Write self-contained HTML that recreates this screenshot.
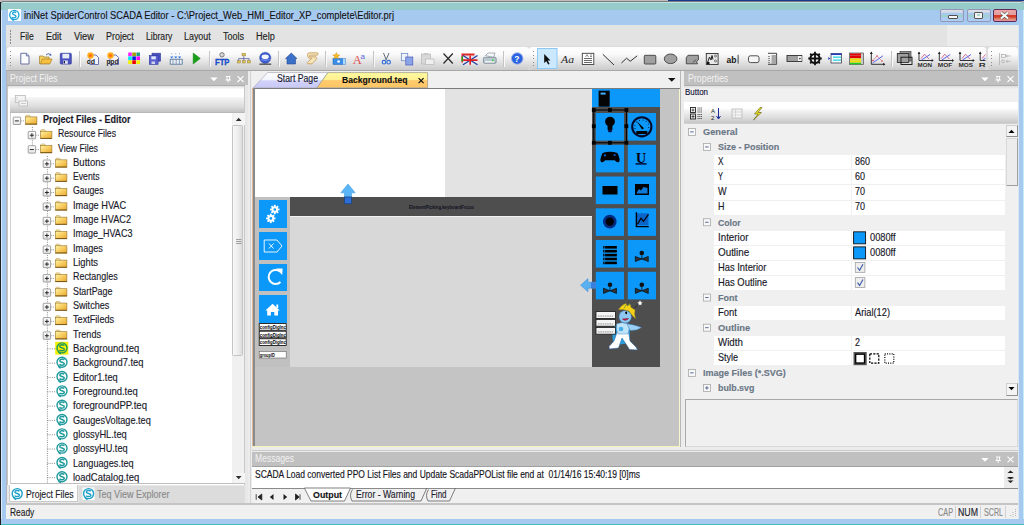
<!DOCTYPE html>
<html><head><meta charset="utf-8">
<style>
*{margin:0;padding:0;box-sizing:border-box}
html,body{width:1024px;height:525px;overflow:hidden;background:#d4d4d4}
body{position:relative;font-family:"Liberation Sans",sans-serif}
.a{position:absolute}
.t{position:absolute;white-space:pre;line-height:1;font-family:"Liberation Sans",sans-serif;-webkit-text-stroke:0.15px currentColor}
svg.a{overflow:visible}
</style></head><body>
<div class="a" style="left:0.00px;top:0.00px;width:1024.00px;height:525.00px;background:#bebebe;"></div>
<div class="a" style="left:668.00px;top:0.00px;width:356.00px;height:1.20px;background:#17388e;"></div>
<div class="a" style="left:0.00px;top:1.00px;width:1024.00px;height:524.00px;background:#7c7c7c;border-radius:4px 4px 0 0;"></div>
<div class="a" style="left:0.00px;top:2.00px;width:1.00px;height:523.00px;background:#202020;"></div>
<div class="a" style="left:1.00px;top:2.00px;width:1023.00px;height:523.00px;background:#a6c9ef;border-radius:3px 3px 0 0;"></div>
<div class="a" style="left:1.00px;top:2.00px;width:1023.00px;height:8.00px;background:#96cbca;border-radius:3px 3px 0 0;"></div>
<div class="a" style="left:3.00px;top:2.00px;width:1018.00px;height:1.00px;background:#bde3e3;"></div>
<div class="a" style="left:1.00px;top:10.00px;width:1.00px;height:509.00px;background:#d8ecff;"></div>
<div class="a" style="left:1023.00px;top:10.00px;width:1.00px;height:513.00px;background:#c4ecf8;"></div>
<div class="a" style="left:1.00px;top:519.00px;width:1023.00px;height:4.50px;background:#a6c9ef;"></div>
<div class="a" style="left:1.00px;top:523.50px;width:1023.00px;height:1.50px;background:#45bcb6;"></div>
<div class="a" style="left:6.00px;top:25.00px;width:1012.00px;height:494.00px;background:#f0f0f0;"></div>
<div class="a" style="left:6.00px;top:25.00px;width:1.00px;height:494.00px;background:#b0b4bc;"></div>
<div class="a" style="left:1018.00px;top:25.00px;width:1.00px;height:494.00px;background:#dde6ee;"></div>
<div class="a" style="left:8.00px;top:9.00px;width:12.50px;height:12.00px;background:#ffffff;"></div>
<svg class="a" style="left:8px;top:9px;" width="13" height="13" viewBox="0 0 13 13"><circle cx="6.3" cy="6" r="4.6" fill="none" stroke="#1aa3d6" stroke-width="1.3"/><path d="M8.2 3.6 C7 2.6 4.4 2.9 4.6 4.6 C4.8 6.2 8.2 5.8 8 7.6 C7.8 9.2 5 9.2 3.9 8.2" fill="none" stroke="#1aa3d6" stroke-width="1.3"/><path d="M4 10 L5.5 12" stroke="#1aa3d6" stroke-width="1.2"/></svg>
<div class="t" style="left:23.60px;top:10.00px;font-size:10.59px;color:#141414;font-weight:normal;transform-origin:0 0;transform:scaleX(0.8818);">iniNet SpiderControl SCADA Editor - C:\Project_Web_HMI_Editor_XP_complete\Editor.prj</div>
<div class="a" style="left:940.30px;top:9.10px;width:24.00px;height:12.50px;background:linear-gradient(#dcdfe6 0%,#d4dae4 22%,#a9c9f0 25%,#a9c9f0 45%,#9fd2cb 50%,#9fd2cb 62%,#a9c9f0 68%,#b0d0f2 100%);border:1px solid #9494b8;border-radius:2px;"></div>
<div class="a" style="left:966.50px;top:9.10px;width:24.00px;height:12.50px;background:linear-gradient(#dcdfe6 0%,#d4dae4 22%,#a9c9f0 25%,#a9c9f0 45%,#9fd2cb 50%,#9fd2cb 62%,#a9c9f0 68%,#b0d0f2 100%);border:1px solid #9494b8;border-radius:2px;"></div>
<div class="a" style="left:992.50px;top:9.10px;width:24.00px;height:12.50px;background:linear-gradient(#f2a8a8 0%,#eaa0a0 22%,#e0a4a4 25%,#e0a0a0 45%,#d83a2a 50%,#d83a2a 64%,#d46440 70%,#e08a80 85%,#e89898 100%);border:1px solid #5a2a58;border-radius:2px;"></div>
<div class="a" style="left:948.00px;top:15.00px;width:9.50px;height:3.60px;background:#f8f8f8;border:1px solid #505050;border-radius:1px;"></div>
<div class="a" style="left:974.00px;top:11.80px;width:9.20px;height:6.80px;background:#f4f4f4;border:1.6px solid #585858;border-radius:1px;"></div>
<div class="a" style="left:977.00px;top:14.30px;width:3.20px;height:1.80px;background:#a8d8d0;"></div>
<svg class="a" style="left:0px;top:0px;" width="1024" height="30" viewBox="0 0 1024 30"><path d="M1001 12.6 L1008 18.4 M1008 12.6 L1001 18.4" stroke="#606060" stroke-width="3.2"/><path d="M1001 12.6 L1008 18.4 M1008 12.6 L1001 18.4" stroke="#fafafa" stroke-width="2"/></svg>
<div class="a" style="left:6.00px;top:25.00px;width:941.00px;height:21.00px;background:#e3e3e3;"></div>
<div class="a" style="left:947.00px;top:25.00px;width:71.00px;height:21.00px;background:#ebebeb;"></div>
<div class="a" style="left:9.50px;top:30.00px;width:1.50px;height:1.50px;background:#8c8c8c;"></div>
<div class="a" style="left:9.50px;top:33.00px;width:1.50px;height:1.50px;background:#8c8c8c;"></div>
<div class="a" style="left:9.50px;top:36.00px;width:1.50px;height:1.50px;background:#8c8c8c;"></div>
<div class="a" style="left:9.50px;top:39.00px;width:1.50px;height:1.50px;background:#8c8c8c;"></div>
<div class="a" style="left:9.50px;top:42.00px;width:1.50px;height:1.50px;background:#8c8c8c;"></div>
<div class="t" style="left:20.10px;top:32.00px;font-size:10.38px;color:#1e1e1e;font-weight:normal;transform-origin:0 0;transform:scaleX(0.8194);">File</div>
<div class="t" style="left:46.30px;top:32.00px;font-size:10.38px;color:#1e1e1e;font-weight:normal;transform-origin:0 0;transform:scaleX(0.8720);">Edit</div>
<div class="t" style="left:73.80px;top:32.00px;font-size:10.38px;color:#1e1e1e;font-weight:normal;transform-origin:0 0;transform:scaleX(0.8964);">View</div>
<div class="t" style="left:105.60px;top:32.00px;font-size:10.38px;color:#1e1e1e;font-weight:normal;transform-origin:0 0;transform:scaleX(0.8608);">Project</div>
<div class="t" style="left:145.70px;top:32.00px;font-size:10.38px;color:#1e1e1e;font-weight:normal;transform-origin:0 0;transform:scaleX(0.8292);">Library</div>
<div class="t" style="left:184.40px;top:32.00px;font-size:10.38px;color:#1e1e1e;font-weight:normal;transform-origin:0 0;transform:scaleX(0.8570);">Layout</div>
<div class="t" style="left:223.00px;top:32.00px;font-size:10.38px;color:#1e1e1e;font-weight:normal;transform-origin:0 0;transform:scaleX(0.8707);">Tools</div>
<div class="t" style="left:256.40px;top:32.00px;font-size:10.38px;color:#1e1e1e;font-weight:normal;transform-origin:0 0;transform:scaleX(0.8808);">Help</div>
<div class="a" style="left:6.00px;top:46.00px;width:1012.00px;height:25.00px;background:#dcdcdc;"></div>
<div class="a" style="left:7.00px;top:47.00px;width:521.50px;height:23.00px;background:linear-gradient(#fefefe 0%,#fbfbfb 30%,#ededed 50%,#dcdcdc 75%,#cbcbcb 100%);border-radius:3px;"></div>
<div class="a" style="left:529.00px;top:47.00px;width:457.00px;height:23.00px;background:linear-gradient(#fefefe 0%,#fbfbfb 30%,#ededed 50%,#dcdcdc 75%,#cbcbcb 100%);border-radius:3px;"></div>
<div class="a" style="left:987.50px;top:47.00px;width:30.50px;height:23.00px;background:linear-gradient(#fefefe 0%,#fbfbfb 30%,#ededed 50%,#dcdcdc 75%,#cbcbcb 100%);border-radius:3px;"></div>
<div class="a" style="left:6.00px;top:69.60px;width:1012.00px;height:1.20px;background:#a8a8a8;"></div>
<div class="a" style="left:10.00px;top:51.00px;width:1.20px;height:1.30px;background:#8c8c8c;"></div>
<div class="a" style="left:10.00px;top:54.50px;width:1.20px;height:1.30px;background:#8c8c8c;"></div>
<div class="a" style="left:10.00px;top:58.00px;width:1.20px;height:1.30px;background:#8c8c8c;"></div>
<div class="a" style="left:10.00px;top:61.50px;width:1.20px;height:1.30px;background:#8c8c8c;"></div>
<div class="a" style="left:10.00px;top:65.00px;width:1.20px;height:1.30px;background:#8c8c8c;"></div>
<div class="a" style="left:533.00px;top:51.00px;width:1.20px;height:1.30px;background:#8c8c8c;"></div>
<div class="a" style="left:533.00px;top:54.50px;width:1.20px;height:1.30px;background:#8c8c8c;"></div>
<div class="a" style="left:533.00px;top:58.00px;width:1.20px;height:1.30px;background:#8c8c8c;"></div>
<div class="a" style="left:533.00px;top:61.50px;width:1.20px;height:1.30px;background:#8c8c8c;"></div>
<div class="a" style="left:533.00px;top:65.00px;width:1.20px;height:1.30px;background:#8c8c8c;"></div>
<div class="a" style="left:991.00px;top:51.00px;width:1.20px;height:1.30px;background:#8c8c8c;"></div>
<div class="a" style="left:991.00px;top:54.50px;width:1.20px;height:1.30px;background:#8c8c8c;"></div>
<div class="a" style="left:991.00px;top:58.00px;width:1.20px;height:1.30px;background:#8c8c8c;"></div>
<div class="a" style="left:991.00px;top:61.50px;width:1.20px;height:1.30px;background:#8c8c8c;"></div>
<div class="a" style="left:991.00px;top:65.00px;width:1.20px;height:1.30px;background:#8c8c8c;"></div>
<div class="a" style="left:79.00px;top:51.00px;width:0.90px;height:16.00px;background:#c4c4c4;"></div>
<div class="a" style="left:79.90px;top:51.00px;width:0.70px;height:16.00px;background:#fafafa;"></div>
<div class="a" style="left:209.00px;top:51.00px;width:0.90px;height:16.00px;background:#c4c4c4;"></div>
<div class="a" style="left:209.90px;top:51.00px;width:0.70px;height:16.00px;background:#fafafa;"></div>
<div class="a" style="left:278.00px;top:51.00px;width:0.90px;height:16.00px;background:#c4c4c4;"></div>
<div class="a" style="left:278.90px;top:51.00px;width:0.70px;height:16.00px;background:#fafafa;"></div>
<div class="a" style="left:325.00px;top:51.00px;width:0.90px;height:16.00px;background:#c4c4c4;"></div>
<div class="a" style="left:325.90px;top:51.00px;width:0.70px;height:16.00px;background:#fafafa;"></div>
<div class="a" style="left:373.00px;top:51.00px;width:0.90px;height:16.00px;background:#c4c4c4;"></div>
<div class="a" style="left:373.90px;top:51.00px;width:0.70px;height:16.00px;background:#fafafa;"></div>
<div class="a" style="left:503.00px;top:51.00px;width:0.90px;height:16.00px;background:#c4c4c4;"></div>
<div class="a" style="left:503.90px;top:51.00px;width:0.70px;height:16.00px;background:#fafafa;"></div>
<div class="a" style="left:891.00px;top:51.00px;width:0.90px;height:16.00px;background:#c4c4c4;"></div>
<div class="a" style="left:891.90px;top:51.00px;width:0.70px;height:16.00px;background:#fafafa;"></div>
<svg class="a" style="left:0px;top:0px;" width="1024" height="72" viewBox="0 0 1024 72"><path d="M20.8 53.3 H26.6 L29 55.7 V64 H20.8 Z" fill="#fcfcff" stroke="#5a6494" stroke-width="0.9"/><path d="M26.4 53.3 V55.9 H29" fill="#c8d0f0" stroke="#5a6494" stroke-width="0.8"/><path d="M39.5 56 H43 L44 57 H49 V63.8 H39.5 Z" fill="#f0d060" stroke="#a08030" stroke-width="0.7"/><path d="M40.5 63.8 L42.3 59 H52 L50 63.8 Z" fill="#f8c040" stroke="#b08028" stroke-width="0.7"/><path d="M46 55 Q48 52.5 50.5 54.5" fill="none" stroke="#4060a0" stroke-width="0.9"/><path d="M50 53.5 L51.8 55.3 L49.5 55.8Z" fill="#3050b0"/><rect x="60.3" y="53.3" width="11" height="10.8" rx="0.8" fill="#4a50c0" stroke="#30389a" stroke-width="0.7"/><rect x="62.4" y="53.8" width="6.8" height="4.6" fill="#e8ecf8"/><rect x="63" y="60.5" width="4.8" height="3.3" fill="#e0e4f0"/><rect x="63.6" y="61" width="1.4" height="2.4" fill="#202040"/><path d="M90 55 H96 L98.5 57.5 V64.5 H90 Z" fill="#f4f4fa" stroke="#5058a0" stroke-width="0.8"/><circle cx="90.5" cy="55.5" r="3.2" fill="#ffb020"/><circle cx="90.5" cy="55.5" r="1.6" fill="#ff7010"/><path d="M110 55 H116 L118.5 57.5 V64.5 H110 Z" fill="#f4f4fa" stroke="#5058a0" stroke-width="0.8"/><circle cx="110.5" cy="55.5" r="3.2" fill="#ffb020"/><circle cx="110.5" cy="55.5" r="1.6" fill="#ff7010"/><text x="86.8" y="64.3" font-family="Liberation Sans" font-weight="bold" font-size="7" fill="#202020">cd</text><text x="106.5" y="64.3" font-family="Liberation Sans" font-weight="bold" font-size="6.3" fill="#202020" textLength="12" lengthAdjust="spacingAndGlyphs">ppd</text><rect x="128.2" y="52.5" width="3.6" height="3.7" fill="#ff20ff"/><rect x="132.29999999999998" y="52.5" width="3.6" height="3.7" fill="#a0a000"/><rect x="136.39999999999998" y="52.5" width="3.6" height="3.7" fill="#20a080"/><rect x="128.2" y="56.4" width="3.6" height="3.7" fill="#00e8f0"/><rect x="132.29999999999998" y="56.4" width="3.6" height="3.7" fill="#0020e0"/><rect x="136.39999999999998" y="56.4" width="3.6" height="3.7" fill="#ff00ff"/><rect x="128.2" y="60.3" width="3.6" height="3.7" fill="#f0f000"/><rect x="132.29999999999998" y="60.3" width="3.6" height="3.7" fill="#f00000"/><rect x="136.39999999999998" y="60.3" width="3.6" height="3.7" fill="#f0f000"/><rect x="152" y="53.2" width="8.5" height="8" fill="#4a50c0" stroke="#30389a" stroke-width="0.6"/><rect x="149.3" y="55.5" width="8.8" height="8.8" fill="#5a60d0" stroke="#30389a" stroke-width="0.6"/><rect x="151.3" y="56.3" width="4.5" height="3" fill="#e0e4f8"/><rect x="151.5" y="61.5" width="3.5" height="2.5" fill="#d0d4e8"/><rect x="170.2" y="59.2" width="12" height="5" fill="#e8eef8" stroke="#507090" stroke-width="0.8"/><path d="M173 59.2 V64.2 M176.2 59.2 V64.2 M179.4 59.2 V64.2" stroke="#507090" stroke-width="0.6"/><path d="M170.20000000000002 56.5 L171.8 58.6 L173.4 56.5 Z" fill="#3070e0"/><rect x="171.4" y="53.2" width="0.8" height="1" fill="#6090d0"/><path d="M174.20000000000002 56.5 L175.8 58.6 L177.4 56.5 Z" fill="#3070e0"/><rect x="175.4" y="53.2" width="0.8" height="1" fill="#6090d0"/><path d="M178.0 56.5 L179.6 58.6 L181.2 56.5 Z" fill="#3070e0"/><rect x="179.2" y="53.2" width="0.8" height="1" fill="#6090d0"/><path d="M193.2 53 L200.3 58.4 L193.2 64 Z" fill="#18a018" stroke="#108010" stroke-width="0.5"/><circle cx="222" cy="54.8" r="2.2" fill="#d8d8d8" stroke="#505050" stroke-width="0.7"/><text x="215" y="64.8" font-family="Liberation Sans" font-weight="bold" font-size="8.4" fill="#1a5ef0" stroke="#0a2a90" stroke-width="0.3" textLength="14.5" lengthAdjust="spacingAndGlyphs">FTP</text><rect x="242" y="53.3" width="3.6" height="2.5" fill="#d8c860" stroke="#a08030" stroke-width="0.5"/><path d="M243.8 55.8 V58.6 M238.6 58.6 H249.2 M238.6 58.6 V61 M243.8 58.6 V61 M249 58.6 V61" stroke="#5050a0" stroke-width="0.7"/><rect x="237.5" y="60.6" width="2.8" height="2.4" fill="#d8c860" stroke="#a08030" stroke-width="0.5"/><rect x="242.4" y="60.6" width="2.8" height="2.4" fill="#d8c860" stroke="#a08030" stroke-width="0.5"/><rect x="247.5" y="60.6" width="2.8" height="2.4" fill="#d8c860" stroke="#a08030" stroke-width="0.5"/><circle cx="265.2" cy="57.8" r="5.6" fill="#3a5cd0" stroke="#2a40a0" stroke-width="0.6" stroke-dasharray="1.4 0.6"/><ellipse cx="265.2" cy="56.8" rx="3.6" ry="2.4" fill="#f4f6fc"/><path d="M261 59.5 Q265 61.5 269.5 59.5" fill="none" stroke="#8aa0f0" stroke-width="0.8"/><rect x="259.4" y="63.6" width="11.8" height="1.1" fill="#303030"/><path d="M285.5 58.6 L291.3 53 L297 58.6 H295.5 V64 H287 V58.6 Z" fill="#3a70c8" stroke="#284a90" stroke-width="0.6"/><path d="M307.5 54.5 Q307.5 52.8 309.5 52.8 H317.5 Q318.8 53.5 317.3 55.2 H310.5 Q309 55.2 309.5 56.8 H316 Q317.8 58.5 315.5 60.2 L312 63.8 H307.8 Q306.5 62.5 308.5 61.5 L311.8 58.2 H309.2 Q307.5 57.5 307.5 54.5 Z" fill="#f2e6b8" stroke="#c89858" stroke-width="0.8"/><rect x="333" y="58.5" width="12.5" height="6" fill="#3a8ee8" stroke="#2060b0" stroke-width="0.5"/><rect x="343" y="58.5" width="2.5" height="6" fill="#b0d8f8"/><path d="M336.3 52.4 L337.3 54.8 L339.8 54.9 L337.9 56.4 L338.6 58.8 L336.3 57.4 L334 58.8 L334.7 56.4 L332.8 54.9 L335.3 54.8 Z" fill="#f8c020" stroke="#d08010" stroke-width="0.4"/><circle cx="338.6" cy="61.5" r="1.3" fill="#fff"/><text x="352.8" y="64.3" font-family="Liberation Serif" font-size="12.5" fill="#e05050">A</text><text x="360.5" y="58.5" font-family="Liberation Sans" font-size="8" fill="#5a68e0">a</text><path d="M383.5 53 L386.3 60 M389 53 L386 60" stroke="#606878" stroke-width="1"/><circle cx="384" cy="62.2" r="1.8" fill="none" stroke="#2e6ad8" stroke-width="1.1"/><circle cx="388.6" cy="62.2" r="1.8" fill="none" stroke="#2e6ad8" stroke-width="1.1"/><rect x="401.3" y="53.3" width="6.5" height="7.5" fill="#eef2fa" stroke="#6080c0" stroke-width="0.7"/><rect x="405.8" y="57" width="7" height="8" fill="#8aa4e8" stroke="#4a5ab8" stroke-width="0.7"/><rect x="421.5" y="54" width="9" height="10" fill="#d8d8d8" stroke="#b8b8b8" stroke-width="0.7"/><rect x="425.5" y="59" width="8.5" height="5.5" fill="#efefef" stroke="#b8b8b8" stroke-width="0.7"/><rect x="424" y="53" width="4" height="2" fill="#c8c8c8"/><path d="M443.5 53.5 L452.8 63.5 M452.8 53.5 L443.5 63.5" stroke="#282828" stroke-width="1.2"/><rect x="461.5" y="53.5" width="13" height="9" fill="#e02828"/><rect x="463" y="55.5" width="14.5" height="9.2" fill="#e8e8f0"/><path d="M463 55.5 L477.5 64.7 M477.5 55.5 L463 64.7" stroke="#2040a0" stroke-width="1.3"/><path d="M470.2 55.5 V64.7 M463 60.1 H477.5" stroke="#e02020" stroke-width="1.6"/><rect x="461.5" y="56.5" width="1.5" height="5" fill="#20a020"/><path d="M485.5 55.5 L488 53 H495 L493.5 57.5 Z" fill="#f8f8f8" stroke="#708090" stroke-width="0.6"/><rect x="483.4" y="57.3" width="12.8" height="6" rx="1.2" fill="#b8c8d0" stroke="#607080" stroke-width="0.6"/><rect x="485" y="61" width="9" height="1.5" fill="#f0f0f0"/><circle cx="492.8" cy="60.3" r="0.9" fill="#20d020"/><circle cx="517.2" cy="58.5" r="5.8" fill="#2a64e0" stroke="#a8b8e8" stroke-width="0.9"/><text x="514.3" y="62" font-family="Liberation Sans" font-weight="bold" font-size="8.5" fill="#fff">?</text><rect x="537.5" y="48.5" width="19.5" height="20" fill="#cce8ff" stroke="#8ccaf4" stroke-width="1"/><path d="M544.2 54 L544.2 63 L546.3 61.2 L548.2 64.6 L549.6 63.9 L547.8 60.6 L550.5 60.4 Z" fill="#101010"/><text x="561" y="62.6" font-family="Liberation Serif" font-style="italic" font-size="9.5" fill="#282828" textLength="13" lengthAdjust="spacingAndGlyphs">Aa</text><rect x="582.3" y="53.3" width="11.5" height="11.2" fill="#fff" stroke="#404040" stroke-width="0.9"/><path d="M584 58.5 H592 M584 60.5 H592 M584 62.5 H592" stroke="#404040" stroke-width="0.8"/><path d="M585.5 57 L587 54.5 L588.5 57 M590 55 H592 M590 56.5 H592" stroke="#404040" stroke-width="0.6" fill="none"/><path d="M602.8 54.3 L614 65" stroke="#303030" stroke-width="1"/><path d="M621.4 63 L626.6 58.2 L630.2 61.3 L637.2 55.8" fill="none" stroke="#303030" stroke-width="1"/><rect x="644.3" y="55.3" width="11.5" height="8.7" rx="0.8" fill="#a0a0a0" stroke="#404040" stroke-width="0.9"/><ellipse cx="670.6" cy="58.8" rx="6.3" ry="4.8" fill="#a0a0a0" stroke="#404040" stroke-width="0.9"/><path d="M686.3 57.5 L688 55.3 H698.4 V60 L696.5 61.7 L697.5 63.8 H686.3 Z M693 62.5 L696 59.5" fill="#a0a0a0" stroke="#404040" stroke-width="0.9"/><rect x="706.3" y="53.5" width="11.8" height="11" fill="#e8e8e8" stroke="#303030" stroke-width="0.9"/><path d="M707 64 L709.5 57 L711 60 L712 55.5 L713 59.5" fill="none" stroke="#202020" stroke-width="1"/><circle cx="715.5" cy="56" r="1" fill="none" stroke="#303030" stroke-width="0.6"/><circle cx="715.5" cy="61" r="1" fill="none" stroke="#303030" stroke-width="0.6"/><rect x="707" y="62" width="2.5" height="2.3" fill="#101010"/><text x="726.5" y="63" font-family="Liberation Sans" font-weight="bold" font-size="8.5" fill="#181818" textLength="10" lengthAdjust="spacingAndGlyphs">ab</text><rect x="737.7" y="54.8" width="0.8" height="8.8" fill="#181818"/><rect x="748.5" y="55.8" width="10.5" height="6.8" rx="2" fill="#f6f6f6" stroke="#404040" stroke-width="0.9"/><path d="M768 53.3 H776.6 V64.3 H768" fill="none" stroke="#303030" stroke-width="0.9"/><rect x="771.6" y="55" width="4.6" height="9" fill="#a8a8a8"/><path d="M768 56.5 H770 M768 58.5 H770 M768 60.5 H770 M768 62.5 H770" stroke="#505050" stroke-width="0.6"/><rect x="787" y="55.5" width="14.8" height="6" fill="#a0a0a0" stroke="#303030" stroke-width="0.9"/><rect x="798" y="56" width="3.6" height="5" fill="#f0f0f0"/><path d="M798.8 58 L801 58 L799.9 59.5Z" fill="#202020"/><circle cx="815" cy="58.5" r="4.6" fill="none" stroke="#101010" stroke-width="2"/><circle cx="815" cy="58.5" r="0.9" fill="#101010"/><path d="M815 51.8 V65.2 M808.3 58.5 H821.7 M810.2 53.7 L811.8 55.3 M818.2 61.7 L819.8 63.3 M819.8 53.7 L818.2 55.3 M811.8 61.7 L810.2 63.3" stroke="#101010" stroke-width="1.8"/><rect x="831" y="53.5" width="10.5" height="9.5" fill="#f4f8fc" stroke="#404050" stroke-width="0.8"/><rect x="831" y="53.5" width="10.5" height="1.5" fill="#2040c0"/><rect x="833" y="56.5" width="8" height="1.3" fill="#30d8e0"/><rect x="833" y="59.5" width="8" height="1.3" fill="#30d8e0"/><path d="M828.3 57 L830.3 58.5 L828.3 60 Z" fill="#2040c0"/><rect x="849.5" y="53" width="14" height="11.5" fill="#c8c8c8" stroke="#505050" stroke-width="0.7"/><rect x="850" y="53.5" width="11" height="2.2" fill="#e00000"/><rect x="850" y="56" width="11" height="2.2" fill="#e00000"/><rect x="850" y="58.5" width="11" height="2.2" fill="#f0e000"/><rect x="850" y="61" width="11" height="1.5" fill="#f0e000"/><rect x="850" y="62.8" width="11" height="1.5" fill="#20d020"/><defs><clipPath id="tb2"><rect x="529" y="44" width="456.5" height="28"/></clipPath></defs><g clip-path="url(#tb2)"><path d="M871.3 52.5 V64.3 H884" fill="none" stroke="#202020" stroke-width="0.9"/><path d="M869.8 54 L871.3 51.6 L872.8 54 Z M883.2 62.8 L885.4 64.3 L883.2 65.8 Z" fill="#202020"/><path d="M873 60.5 L877 56 L882 61" fill="none" stroke="#d85080" stroke-width="0.8" stroke-dasharray="1.2 0.6"/><path d="M872.5 63 L883 55.8" stroke="#4a5af0" stroke-width="0.9"/><circle cx="873" cy="60.5" r="0.7" fill="#d02020"/><circle cx="877" cy="56" r="0.7" fill="#d02020"/><circle cx="882" cy="61" r="0.7" fill="#d02020"/><path d="M919.0 52.5 V60.5 H932.5" fill="none" stroke="#202020" stroke-width="0.9"/><path d="M917.6 54 L919.0 51.6 L920.4 54 Z M931.7 59.1 L933.7 60.5 L931.7 61.9 Z" fill="#202020"/><path d="M921.0 58.5 L924.5 54.2 L929.0 59" fill="none" stroke="#d05080" stroke-width="0.8"/><path d="M921.5 60 L930.0 54.5" stroke="#4a5af0" stroke-width="0.9"/><text x="917.5" y="66.6" font-family="Liberation Sans" font-weight="bold" font-size="4.8" fill="#303030" textLength="14.5" lengthAdjust="spacingAndGlyphs">MON</text><path d="M939.3 52.5 V60.5 H952.8" fill="none" stroke="#202020" stroke-width="0.9"/><path d="M937.9 54 L939.3 51.6 L940.6999999999999 54 Z M952.0 59.1 L954.0 60.5 L952.0 61.9 Z" fill="#202020"/><path d="M941.3 58.5 L944.8 54.2 L949.3 59" fill="none" stroke="#d05080" stroke-width="0.8"/><path d="M941.8 60 L950.3 54.5" stroke="#4a5af0" stroke-width="0.9"/><text x="937.8" y="66.6" font-family="Liberation Sans" font-weight="bold" font-size="4.8" fill="#303030" textLength="14.5" lengthAdjust="spacingAndGlyphs">MOF</text><path d="M960.0 52.5 V60.5 H973.5" fill="none" stroke="#202020" stroke-width="0.9"/><path d="M958.6 54 L960.0 51.6 L961.4 54 Z M972.7 59.1 L974.7 60.5 L972.7 61.9 Z" fill="#202020"/><path d="M962.0 58.5 L965.5 54.2 L970.0 59" fill="none" stroke="#d05080" stroke-width="0.8"/><path d="M962.5 60 L971.0 54.5" stroke="#4a5af0" stroke-width="0.9"/><text x="958.5" y="66.6" font-family="Liberation Sans" font-weight="bold" font-size="4.8" fill="#303030" textLength="14.5" lengthAdjust="spacingAndGlyphs">MOS</text><path d="M980.2 52.5 V60.5 H993.7" fill="none" stroke="#202020" stroke-width="0.9"/><path d="M978.8000000000001 54 L980.2 51.6 L981.6 54 Z M992.9000000000001 59.1 L994.9000000000001 60.5 L992.9000000000001 61.9 Z" fill="#202020"/><path d="M982.2 58.5 L985.7 54.2 L990.2 59" fill="none" stroke="#d05080" stroke-width="0.8"/><path d="M982.7 60 L991.2 54.5" stroke="#4a5af0" stroke-width="0.9"/><text x="978.7" y="66.6" font-family="Liberation Sans" font-weight="bold" font-size="4.8" fill="#303030" textLength="14.5" lengthAdjust="spacingAndGlyphs">RO</text></g><rect x="900" y="51.5" width="11" height="9.5" fill="#909090" stroke="#303030" stroke-width="0.6"/><rect x="897.3" y="53.5" width="11.5" height="9" fill="#a0a0a0" stroke="#202020" stroke-width="0.8"/><rect x="901" y="57.2" width="11" height="7.3" fill="none" stroke="#101010" stroke-width="0.9"/><path d="M999.5 53 V65" stroke="#b0b0b0" stroke-width="0.8"/><rect x="1001.5" y="54.5" width="4" height="2.8" fill="none" stroke="#a8a8a8" stroke-width="0.7"/><circle cx="1003" cy="61.3" r="1.5" fill="none" stroke="#a8a8a8" stroke-width="0.7"/><path d="M1006 56 H1010.5 M1006 61.3 H1010.5 M1007.5 54.8 L1006 56 L1007.5 57.2 M1007.5 60.1 L1006 61.3 L1007.5 62.5" fill="none" stroke="#a8a8a8" stroke-width="0.7"/></svg>
<div class="a" style="left:7.00px;top:71.00px;width:241.00px;height:14.50px;background:#c0c0c0;"></div>
<div class="t" style="left:9.80px;top:74.00px;font-size:10.17px;color:#f2f2f2;font-weight:normal;transform-origin:0 0;transform:scaleX(0.8519);-webkit-text-stroke:0;">Project Files</div>
<svg class="a" style="left:0px;top:0px;" width="250" height="90" viewBox="0 0 250 90"><path d="M210.2 77.4 H217.6 L213.9 81.2 Z" fill="#fff"/><path d="M226 76.5 H230.5 M227 76.5 V80 H229.5 V76.5 M225.5 80 H231 M228.2 80 V82.5" fill="none" stroke="#fff" stroke-width="0.9"/><path d="M237.5 76.2 L243.5 82 M243.5 76.2 L237.5 82" stroke="#fff" stroke-width="1.1"/></svg>
<div class="a" style="left:7.00px;top:85.50px;width:238.00px;height:399.50px;background:#ffffff;border-left:1px solid #c4c4c4;"></div>
<div class="a" style="left:7.00px;top:85.00px;width:241.00px;height:1.00px;background:#acacac;"></div>
<div class="a" style="left:8.00px;top:86.00px;width:237.00px;height:2.50px;background:linear-gradient(#dedede,#fbfbfb);"></div>
<div class="a" style="left:10.00px;top:96.50px;width:235.00px;height:16.00px;background:linear-gradient(#f6f6f6 0%,#eeeeee 20%,#dcdcdc 60%,#c4c4c4 92%,#cccccc 100%);"></div>
<div class="a" style="left:10.00px;top:112.30px;width:235.00px;height:0.80px;background:#b8b8b8;"></div>
<svg class="a" style="left:0px;top:0px;" width="40" height="120" viewBox="0 0 40 120"><rect x="15.3" y="95.5" width="10" height="7" fill="#f4f4f4" stroke="#b8b8b8" stroke-width="0.8"/><rect x="19" y="101" width="8.5" height="5" fill="#f4f4f4" stroke="#b8b8b8" stroke-width="0.8"/><path d="M21 103.5 H26" stroke="#b8b8b8" stroke-width="0.7"/><path d="M17 97 V101" stroke="#c8c8c8" stroke-width="0.6"/></svg>
<div class="a" style="left:9.50px;top:113.00px;width:0.80px;height:371.00px;background:#d0d0d0;"></div>
<svg class="a" style="left:0px;top:0px;" width="250" height="500" viewBox="0 0 250 500"><defs><linearGradient id="fg" x1="0" y1="0" x2="1" y2="1"><stop offset="0" stop-color="#fff6a8"/><stop offset="0.5" stop-color="#f8cc60"/><stop offset="1" stop-color="#e8a830"/></linearGradient><linearGradient id="pmg" x1="0" y1="0" x2="0" y2="1"><stop offset="0" stop-color="#ffffff"/><stop offset="1" stop-color="#e4e4e4"/></linearGradient><clipPath id="tc"><rect x="10" y="113" width="223" height="370.2"/></clipPath></defs><g clip-path="url(#tc)"><path d="M32.4 127 V152 M47.4 156 V490" stroke="#707070" stroke-width="0.8" stroke-dasharray="1 1.2"/><path d="M20.6 120.9 H25.2" stroke="#707070" stroke-width="0.8" stroke-dasharray="1 1.2"/><rect x="13.2" y="117.10000000000001" width="7.4" height="7.4" fill="url(#pmg)" stroke="#8a8a8a" stroke-width="0.8" rx="0.6"/><path d="M14.899999999999999 120.9 H18.9" stroke="#181818" stroke-width="0.9"/><path d="M25.7 117.7 V116.4 Q25.7 115.30000000000001 26.9 115.30000000000001 H29.5 L30.7 116.7 V117.7 Z" fill="#f4e4a8" stroke="#b89850" stroke-width="0.5"/><rect x="25.5" y="116.9" width="11.4" height="7.4" fill="url(#fg)" stroke="#987428" stroke-width="0.6"/><rect x="25.5" y="123.60000000000001" width="11.4" height="0.8" fill="#6a4c10"/><path d="M35.6 135.22 H40.2" stroke="#707070" stroke-width="0.8" stroke-dasharray="1 1.2"/><rect x="28.2" y="131.42" width="7.4" height="7.4" fill="url(#pmg)" stroke="#8a8a8a" stroke-width="0.8" rx="0.6"/><path d="M29.9 135.22 H33.9" stroke="#181818" stroke-width="0.9"/><path d="M31.9 133.22 V137.22" stroke="#181818" stroke-width="0.9"/><path d="M40.7 132.02 V130.72 Q40.7 129.62 41.9 129.62 H44.5 L45.7 131.02 V132.02 Z" fill="#f4e4a8" stroke="#b89850" stroke-width="0.5"/><rect x="40.5" y="131.22" width="11.4" height="7.4" fill="url(#fg)" stroke="#987428" stroke-width="0.6"/><rect x="40.5" y="137.92" width="11.4" height="0.8" fill="#6a4c10"/><path d="M35.6 149.54000000000002 H40.2" stroke="#707070" stroke-width="0.8" stroke-dasharray="1 1.2"/><rect x="28.2" y="145.74" width="7.4" height="7.4" fill="url(#pmg)" stroke="#8a8a8a" stroke-width="0.8" rx="0.6"/><path d="M29.9 149.54000000000002 H33.9" stroke="#181818" stroke-width="0.9"/><path d="M40.7 146.34000000000003 V145.04000000000002 Q40.7 143.94000000000003 41.9 143.94000000000003 H44.5 L45.7 145.34000000000003 V146.34000000000003 Z" fill="#f4e4a8" stroke="#b89850" stroke-width="0.5"/><rect x="40.5" y="145.54000000000002" width="11.4" height="7.4" fill="url(#fg)" stroke="#987428" stroke-width="0.6"/><rect x="40.5" y="152.24" width="11.4" height="0.8" fill="#6a4c10"/><path d="M50.6 163.86 H55.2" stroke="#707070" stroke-width="0.8" stroke-dasharray="1 1.2"/><rect x="43.2" y="160.06" width="7.4" height="7.4" fill="url(#pmg)" stroke="#8a8a8a" stroke-width="0.8" rx="0.6"/><path d="M44.900000000000006 163.86 H48.900000000000006" stroke="#181818" stroke-width="0.9"/><path d="M46.900000000000006 161.86 V165.86" stroke="#181818" stroke-width="0.9"/><path d="M55.7 160.66000000000003 V159.36 Q55.7 158.26000000000002 56.9 158.26000000000002 H59.5 L60.7 159.66000000000003 V160.66000000000003 Z" fill="#f4e4a8" stroke="#b89850" stroke-width="0.5"/><rect x="55.5" y="159.86" width="11.4" height="7.4" fill="url(#fg)" stroke="#987428" stroke-width="0.6"/><rect x="55.5" y="166.56" width="11.4" height="0.8" fill="#6a4c10"/><path d="M50.6 178.18 H55.2" stroke="#707070" stroke-width="0.8" stroke-dasharray="1 1.2"/><rect x="43.2" y="174.38" width="7.4" height="7.4" fill="url(#pmg)" stroke="#8a8a8a" stroke-width="0.8" rx="0.6"/><path d="M44.900000000000006 178.18 H48.900000000000006" stroke="#181818" stroke-width="0.9"/><path d="M46.900000000000006 176.18 V180.18" stroke="#181818" stroke-width="0.9"/><path d="M55.7 174.98000000000002 V173.68 Q55.7 172.58 56.9 172.58 H59.5 L60.7 173.98000000000002 V174.98000000000002 Z" fill="#f4e4a8" stroke="#b89850" stroke-width="0.5"/><rect x="55.5" y="174.18" width="11.4" height="7.4" fill="url(#fg)" stroke="#987428" stroke-width="0.6"/><rect x="55.5" y="180.88" width="11.4" height="0.8" fill="#6a4c10"/><path d="M50.6 192.5 H55.2" stroke="#707070" stroke-width="0.8" stroke-dasharray="1 1.2"/><rect x="43.2" y="188.7" width="7.4" height="7.4" fill="url(#pmg)" stroke="#8a8a8a" stroke-width="0.8" rx="0.6"/><path d="M44.900000000000006 192.5 H48.900000000000006" stroke="#181818" stroke-width="0.9"/><path d="M46.900000000000006 190.5 V194.5" stroke="#181818" stroke-width="0.9"/><path d="M55.7 189.3 V188.0 Q55.7 186.9 56.9 186.9 H59.5 L60.7 188.3 V189.3 Z" fill="#f4e4a8" stroke="#b89850" stroke-width="0.5"/><rect x="55.5" y="188.5" width="11.4" height="7.4" fill="url(#fg)" stroke="#987428" stroke-width="0.6"/><rect x="55.5" y="195.2" width="11.4" height="0.8" fill="#6a4c10"/><path d="M50.6 206.82 H55.2" stroke="#707070" stroke-width="0.8" stroke-dasharray="1 1.2"/><rect x="43.2" y="203.01999999999998" width="7.4" height="7.4" fill="url(#pmg)" stroke="#8a8a8a" stroke-width="0.8" rx="0.6"/><path d="M44.900000000000006 206.82 H48.900000000000006" stroke="#181818" stroke-width="0.9"/><path d="M46.900000000000006 204.82 V208.82" stroke="#181818" stroke-width="0.9"/><path d="M55.7 203.62 V202.32 Q55.7 201.22 56.9 201.22 H59.5 L60.7 202.62 V203.62 Z" fill="#f4e4a8" stroke="#b89850" stroke-width="0.5"/><rect x="55.5" y="202.82" width="11.4" height="7.4" fill="url(#fg)" stroke="#987428" stroke-width="0.6"/><rect x="55.5" y="209.51999999999998" width="11.4" height="0.8" fill="#6a4c10"/><path d="M50.6 221.14000000000001 H55.2" stroke="#707070" stroke-width="0.8" stroke-dasharray="1 1.2"/><rect x="43.2" y="217.34" width="7.4" height="7.4" fill="url(#pmg)" stroke="#8a8a8a" stroke-width="0.8" rx="0.6"/><path d="M44.900000000000006 221.14000000000001 H48.900000000000006" stroke="#181818" stroke-width="0.9"/><path d="M46.900000000000006 219.14000000000001 V223.14000000000001" stroke="#181818" stroke-width="0.9"/><path d="M55.7 217.94000000000003 V216.64000000000001 Q55.7 215.54000000000002 56.9 215.54000000000002 H59.5 L60.7 216.94000000000003 V217.94000000000003 Z" fill="#f4e4a8" stroke="#b89850" stroke-width="0.5"/><rect x="55.5" y="217.14000000000001" width="11.4" height="7.4" fill="url(#fg)" stroke="#987428" stroke-width="0.6"/><rect x="55.5" y="223.84" width="11.4" height="0.8" fill="#6a4c10"/><path d="M50.6 235.46 H55.2" stroke="#707070" stroke-width="0.8" stroke-dasharray="1 1.2"/><rect x="43.2" y="231.66" width="7.4" height="7.4" fill="url(#pmg)" stroke="#8a8a8a" stroke-width="0.8" rx="0.6"/><path d="M44.900000000000006 235.46 H48.900000000000006" stroke="#181818" stroke-width="0.9"/><path d="M46.900000000000006 233.46 V237.46" stroke="#181818" stroke-width="0.9"/><path d="M55.7 232.26000000000002 V230.96 Q55.7 229.86 56.9 229.86 H59.5 L60.7 231.26000000000002 V232.26000000000002 Z" fill="#f4e4a8" stroke="#b89850" stroke-width="0.5"/><rect x="55.5" y="231.46" width="11.4" height="7.4" fill="url(#fg)" stroke="#987428" stroke-width="0.6"/><rect x="55.5" y="238.16" width="11.4" height="0.8" fill="#6a4c10"/><path d="M50.6 249.78 H55.2" stroke="#707070" stroke-width="0.8" stroke-dasharray="1 1.2"/><rect x="43.2" y="245.98" width="7.4" height="7.4" fill="url(#pmg)" stroke="#8a8a8a" stroke-width="0.8" rx="0.6"/><path d="M44.900000000000006 249.78 H48.900000000000006" stroke="#181818" stroke-width="0.9"/><path d="M46.900000000000006 247.78 V251.78" stroke="#181818" stroke-width="0.9"/><path d="M55.7 246.58 V245.28 Q55.7 244.18 56.9 244.18 H59.5 L60.7 245.58 V246.58 Z" fill="#f4e4a8" stroke="#b89850" stroke-width="0.5"/><rect x="55.5" y="245.78" width="11.4" height="7.4" fill="url(#fg)" stroke="#987428" stroke-width="0.6"/><rect x="55.5" y="252.48" width="11.4" height="0.8" fill="#6a4c10"/><path d="M50.6 264.1 H55.2" stroke="#707070" stroke-width="0.8" stroke-dasharray="1 1.2"/><rect x="43.2" y="260.3" width="7.4" height="7.4" fill="url(#pmg)" stroke="#8a8a8a" stroke-width="0.8" rx="0.6"/><path d="M44.900000000000006 264.1 H48.900000000000006" stroke="#181818" stroke-width="0.9"/><path d="M46.900000000000006 262.1 V266.1" stroke="#181818" stroke-width="0.9"/><path d="M55.7 260.90000000000003 V259.6 Q55.7 258.5 56.9 258.5 H59.5 L60.7 259.90000000000003 V260.90000000000003 Z" fill="#f4e4a8" stroke="#b89850" stroke-width="0.5"/><rect x="55.5" y="260.1" width="11.4" height="7.4" fill="url(#fg)" stroke="#987428" stroke-width="0.6"/><rect x="55.5" y="266.8" width="11.4" height="0.8" fill="#6a4c10"/><path d="M50.6 278.42 H55.2" stroke="#707070" stroke-width="0.8" stroke-dasharray="1 1.2"/><rect x="43.2" y="274.62" width="7.4" height="7.4" fill="url(#pmg)" stroke="#8a8a8a" stroke-width="0.8" rx="0.6"/><path d="M44.900000000000006 278.42 H48.900000000000006" stroke="#181818" stroke-width="0.9"/><path d="M46.900000000000006 276.42 V280.42" stroke="#181818" stroke-width="0.9"/><path d="M55.7 275.22 V273.92 Q55.7 272.82 56.9 272.82 H59.5 L60.7 274.22 V275.22 Z" fill="#f4e4a8" stroke="#b89850" stroke-width="0.5"/><rect x="55.5" y="274.42" width="11.4" height="7.4" fill="url(#fg)" stroke="#987428" stroke-width="0.6"/><rect x="55.5" y="281.12" width="11.4" height="0.8" fill="#6a4c10"/><path d="M50.6 292.74 H55.2" stroke="#707070" stroke-width="0.8" stroke-dasharray="1 1.2"/><rect x="43.2" y="288.94" width="7.4" height="7.4" fill="url(#pmg)" stroke="#8a8a8a" stroke-width="0.8" rx="0.6"/><path d="M44.900000000000006 292.74 H48.900000000000006" stroke="#181818" stroke-width="0.9"/><path d="M46.900000000000006 290.74 V294.74" stroke="#181818" stroke-width="0.9"/><path d="M55.7 289.54 V288.24 Q55.7 287.14 56.9 287.14 H59.5 L60.7 288.54 V289.54 Z" fill="#f4e4a8" stroke="#b89850" stroke-width="0.5"/><rect x="55.5" y="288.74" width="11.4" height="7.4" fill="url(#fg)" stroke="#987428" stroke-width="0.6"/><rect x="55.5" y="295.44" width="11.4" height="0.8" fill="#6a4c10"/><path d="M50.6 307.06 H55.2" stroke="#707070" stroke-width="0.8" stroke-dasharray="1 1.2"/><rect x="43.2" y="303.26" width="7.4" height="7.4" fill="url(#pmg)" stroke="#8a8a8a" stroke-width="0.8" rx="0.6"/><path d="M44.900000000000006 307.06 H48.900000000000006" stroke="#181818" stroke-width="0.9"/><path d="M46.900000000000006 305.06 V309.06" stroke="#181818" stroke-width="0.9"/><path d="M55.7 303.86 V302.56 Q55.7 301.46 56.9 301.46 H59.5 L60.7 302.86 V303.86 Z" fill="#f4e4a8" stroke="#b89850" stroke-width="0.5"/><rect x="55.5" y="303.06" width="11.4" height="7.4" fill="url(#fg)" stroke="#987428" stroke-width="0.6"/><rect x="55.5" y="309.76" width="11.4" height="0.8" fill="#6a4c10"/><path d="M50.6 321.38 H55.2" stroke="#707070" stroke-width="0.8" stroke-dasharray="1 1.2"/><rect x="43.2" y="317.58" width="7.4" height="7.4" fill="url(#pmg)" stroke="#8a8a8a" stroke-width="0.8" rx="0.6"/><path d="M44.900000000000006 321.38 H48.900000000000006" stroke="#181818" stroke-width="0.9"/><path d="M46.900000000000006 319.38 V323.38" stroke="#181818" stroke-width="0.9"/><path d="M55.7 318.18 V316.88 Q55.7 315.78 56.9 315.78 H59.5 L60.7 317.18 V318.18 Z" fill="#f4e4a8" stroke="#b89850" stroke-width="0.5"/><rect x="55.5" y="317.38" width="11.4" height="7.4" fill="url(#fg)" stroke="#987428" stroke-width="0.6"/><rect x="55.5" y="324.08" width="11.4" height="0.8" fill="#6a4c10"/><path d="M50.6 335.70000000000005 H55.2" stroke="#707070" stroke-width="0.8" stroke-dasharray="1 1.2"/><rect x="43.2" y="331.90000000000003" width="7.4" height="7.4" fill="url(#pmg)" stroke="#8a8a8a" stroke-width="0.8" rx="0.6"/><path d="M44.900000000000006 335.70000000000005 H48.900000000000006" stroke="#181818" stroke-width="0.9"/><path d="M46.900000000000006 333.70000000000005 V337.70000000000005" stroke="#181818" stroke-width="0.9"/><path d="M55.7 332.50000000000006 V331.20000000000005 Q55.7 330.1 56.9 330.1 H59.5 L60.7 331.50000000000006 V332.50000000000006 Z" fill="#f4e4a8" stroke="#b89850" stroke-width="0.5"/><rect x="55.5" y="331.70000000000005" width="11.4" height="7.4" fill="url(#fg)" stroke="#987428" stroke-width="0.6"/><rect x="55.5" y="338.40000000000003" width="11.4" height="0.8" fill="#6a4c10"/><path d="M47.4 348.82 H55.5" stroke="#707070" stroke-width="0.8" stroke-dasharray="1 1.2"/><rect x="55.2" y="341.81999999999994" width="13.1" height="12.8" fill="#f4f000"/><circle cx="62" cy="347.91999999999996" r="5" fill="none" stroke="#21985a" stroke-width="1.4"/><path d="M64.3 345.61999999999995 C63.2 344.31999999999994 59.6 344.52 59.8 346.52 C60 348.21999999999997 64.5 347.52 64.3 349.52 C64.1 351.31999999999994 60.4 351.11999999999995 59.5 349.91999999999996" fill="none" stroke="#21985a" stroke-width="1.5"/><path d="M58.4 351.31999999999994 Q58.6 353.52 61 353.71999999999997" fill="none" stroke="#21985a" stroke-width="1.1"/><path d="M47.4 363.14000000000004 H55.5" stroke="#707070" stroke-width="0.8" stroke-dasharray="1 1.2"/><circle cx="62" cy="362.24" r="5" fill="none" stroke="#1f9a9c" stroke-width="1.4"/><path d="M64.3 359.94 C63.2 358.64 59.6 358.84000000000003 59.8 360.84000000000003 C60 362.54 64.5 361.84000000000003 64.3 363.84000000000003 C64.1 365.64 60.4 365.44 59.5 364.24" fill="none" stroke="#1f9a9c" stroke-width="1.5"/><path d="M58.4 365.64 Q58.6 367.84000000000003 61 368.04" fill="none" stroke="#1f9a9c" stroke-width="1.1"/><path d="M47.4 377.46 H55.5" stroke="#707070" stroke-width="0.8" stroke-dasharray="1 1.2"/><circle cx="62" cy="376.55999999999995" r="5" fill="none" stroke="#1f9a9c" stroke-width="1.4"/><path d="M64.3 374.25999999999993 C63.2 372.9599999999999 59.6 373.15999999999997 59.8 375.15999999999997 C60 376.85999999999996 64.5 376.15999999999997 64.3 378.15999999999997 C64.1 379.9599999999999 60.4 379.75999999999993 59.5 378.55999999999995" fill="none" stroke="#1f9a9c" stroke-width="1.5"/><path d="M58.4 379.9599999999999 Q58.6 382.15999999999997 61 382.35999999999996" fill="none" stroke="#1f9a9c" stroke-width="1.1"/><path d="M47.4 391.78000000000003 H55.5" stroke="#707070" stroke-width="0.8" stroke-dasharray="1 1.2"/><circle cx="62" cy="390.88" r="5" fill="none" stroke="#1f9a9c" stroke-width="1.4"/><path d="M64.3 388.58 C63.2 387.28 59.6 387.48 59.8 389.48 C60 391.18 64.5 390.48 64.3 392.48 C64.1 394.28 60.4 394.08 59.5 392.88" fill="none" stroke="#1f9a9c" stroke-width="1.5"/><path d="M58.4 394.28 Q58.6 396.48 61 396.68" fill="none" stroke="#1f9a9c" stroke-width="1.1"/><path d="M47.4 406.09999999999997 H55.5" stroke="#707070" stroke-width="0.8" stroke-dasharray="1 1.2"/><circle cx="62" cy="405.19999999999993" r="5" fill="none" stroke="#1f9a9c" stroke-width="1.4"/><path d="M64.3 402.8999999999999 C63.2 401.5999999999999 59.6 401.79999999999995 59.8 403.79999999999995 C60 405.49999999999994 64.5 404.79999999999995 64.3 406.79999999999995 C64.1 408.5999999999999 60.4 408.3999999999999 59.5 407.19999999999993" fill="none" stroke="#1f9a9c" stroke-width="1.5"/><path d="M58.4 408.5999999999999 Q58.6 410.79999999999995 61 410.99999999999994" fill="none" stroke="#1f9a9c" stroke-width="1.1"/><path d="M47.4 420.42 H55.5" stroke="#707070" stroke-width="0.8" stroke-dasharray="1 1.2"/><circle cx="62" cy="419.52" r="5" fill="none" stroke="#1f9a9c" stroke-width="1.4"/><path d="M64.3 417.21999999999997 C63.2 415.91999999999996 59.6 416.12 59.8 418.12 C60 419.82 64.5 419.12 64.3 421.12 C64.1 422.91999999999996 60.4 422.71999999999997 59.5 421.52" fill="none" stroke="#1f9a9c" stroke-width="1.5"/><path d="M58.4 422.91999999999996 Q58.6 425.12 61 425.32" fill="none" stroke="#1f9a9c" stroke-width="1.1"/><path d="M47.4 434.74000000000007 H55.5" stroke="#707070" stroke-width="0.8" stroke-dasharray="1 1.2"/><circle cx="62" cy="433.84000000000003" r="5" fill="none" stroke="#1f9a9c" stroke-width="1.4"/><path d="M64.3 431.54 C63.2 430.24 59.6 430.44000000000005 59.8 432.44000000000005 C60 434.14000000000004 64.5 433.44000000000005 64.3 435.44000000000005 C64.1 437.24 60.4 437.04 59.5 435.84000000000003" fill="none" stroke="#1f9a9c" stroke-width="1.5"/><path d="M58.4 437.24 Q58.6 439.44000000000005 61 439.64000000000004" fill="none" stroke="#1f9a9c" stroke-width="1.1"/><path d="M47.4 449.06 H55.5" stroke="#707070" stroke-width="0.8" stroke-dasharray="1 1.2"/><circle cx="62" cy="448.15999999999997" r="5" fill="none" stroke="#1f9a9c" stroke-width="1.4"/><path d="M64.3 445.85999999999996 C63.2 444.55999999999995 59.6 444.76 59.8 446.76 C60 448.46 64.5 447.76 64.3 449.76 C64.1 451.55999999999995 60.4 451.35999999999996 59.5 450.15999999999997" fill="none" stroke="#1f9a9c" stroke-width="1.5"/><path d="M58.4 451.55999999999995 Q58.6 453.76 61 453.96" fill="none" stroke="#1f9a9c" stroke-width="1.1"/><path d="M47.4 463.38000000000005 H55.5" stroke="#707070" stroke-width="0.8" stroke-dasharray="1 1.2"/><circle cx="62" cy="462.48" r="5" fill="none" stroke="#1f9a9c" stroke-width="1.4"/><path d="M64.3 460.18 C63.2 458.88 59.6 459.08000000000004 59.8 461.08000000000004 C60 462.78000000000003 64.5 462.08000000000004 64.3 464.08000000000004 C64.1 465.88 60.4 465.68 59.5 464.48" fill="none" stroke="#1f9a9c" stroke-width="1.5"/><path d="M58.4 465.88 Q58.6 468.08000000000004 61 468.28000000000003" fill="none" stroke="#1f9a9c" stroke-width="1.1"/><path d="M47.4 477.7 H55.5" stroke="#707070" stroke-width="0.8" stroke-dasharray="1 1.2"/><circle cx="62" cy="476.79999999999995" r="5" fill="none" stroke="#1f9a9c" stroke-width="1.4"/><path d="M64.3 474.49999999999994 C63.2 473.19999999999993 59.6 473.4 59.8 475.4 C60 477.09999999999997 64.5 476.4 64.3 478.4 C64.1 480.19999999999993 60.4 479.99999999999994 59.5 478.79999999999995" fill="none" stroke="#1f9a9c" stroke-width="1.5"/><path d="M58.4 480.19999999999993 Q58.6 482.4 61 482.59999999999997" fill="none" stroke="#1f9a9c" stroke-width="1.1"/></g></svg>
<div class="t" style="left:42.50px;top:115.00px;font-size:10.17px;color:#1a1a2a;font-weight:bold;transform-origin:0 0;transform:scaleX(0.8859);">Project Files - Editor</div>
<div class="t" style="left:57.50px;top:129.00px;font-size:10.17px;color:#1a1a2a;font-weight:normal;transform-origin:0 0;transform:scaleX(0.8563);">Resource Files</div>
<div class="t" style="left:57.50px;top:144.00px;font-size:10.17px;color:#1a1a2a;font-weight:normal;transform-origin:0 0;transform:scaleX(0.8675);">View Files</div>
<div class="t" style="left:72.50px;top:158.00px;font-size:10.17px;color:#1a1a2a;font-weight:normal;transform-origin:0 0;transform:scaleX(0.9375);">Buttons</div>
<div class="t" style="left:72.50px;top:172.00px;font-size:10.17px;color:#1a1a2a;font-weight:normal;transform-origin:0 0;transform:scaleX(0.8531);">Events</div>
<div class="t" style="left:72.50px;top:186.00px;font-size:10.17px;color:#1a1a2a;font-weight:normal;transform-origin:0 0;transform:scaleX(0.8601);">Gauges</div>
<div class="t" style="left:72.50px;top:201.00px;font-size:10.17px;color:#1a1a2a;font-weight:normal;transform-origin:0 0;transform:scaleX(0.9092);">Image HVAC</div>
<div class="t" style="left:72.50px;top:215.00px;font-size:10.17px;color:#1a1a2a;font-weight:normal;transform-origin:0 0;transform:scaleX(0.9038);">Image HVAC2</div>
<div class="t" style="left:72.50px;top:229.00px;font-size:10.17px;color:#1a1a2a;font-weight:normal;transform-origin:0 0;transform:scaleX(0.8866);">Image_HVAC3</div>
<div class="t" style="left:72.50px;top:244.00px;font-size:10.17px;color:#1a1a2a;font-weight:normal;transform-origin:0 0;transform:scaleX(0.8976);">Images</div>
<div class="t" style="left:72.50px;top:258.00px;font-size:10.17px;color:#1a1a2a;font-weight:normal;transform-origin:0 0;transform:scaleX(0.9185);">Lights</div>
<div class="t" style="left:72.50px;top:272.00px;font-size:10.17px;color:#1a1a2a;font-weight:normal;transform-origin:0 0;transform:scaleX(0.8777);">Rectangles</div>
<div class="t" style="left:72.50px;top:287.00px;font-size:10.17px;color:#1a1a2a;font-weight:normal;transform-origin:0 0;transform:scaleX(0.8722);">StartPage</div>
<div class="t" style="left:72.50px;top:301.00px;font-size:10.17px;color:#1a1a2a;font-weight:normal;transform-origin:0 0;transform:scaleX(0.8932);">Switches</div>
<div class="t" style="left:72.50px;top:315.00px;font-size:10.17px;color:#1a1a2a;font-weight:normal;transform-origin:0 0;transform:scaleX(0.8990);">TextFileds</div>
<div class="t" style="left:72.50px;top:330.00px;font-size:10.17px;color:#1a1a2a;font-weight:normal;transform-origin:0 0;transform:scaleX(0.8964);">Trends</div>
<div class="t" style="left:72.50px;top:344.00px;font-size:10.17px;color:#1a1a2a;font-weight:normal;transform-origin:0 0;transform:scaleX(0.9303);">Background.teq</div>
<div class="t" style="left:72.50px;top:358.00px;font-size:10.17px;color:#1a1a2a;font-weight:normal;transform-origin:0 0;transform:scaleX(0.9167);">Background7.teq</div>
<div class="t" style="left:72.50px;top:373.00px;font-size:10.17px;color:#1a1a2a;font-weight:normal;transform-origin:0 0;transform:scaleX(0.9099);">Editor1.teq</div>
<div class="t" style="left:72.50px;top:387.00px;font-size:10.17px;color:#1a1a2a;font-weight:normal;transform-origin:0 0;transform:scaleX(0.9330);">Foreground.teq</div>
<div class="t" style="left:72.50px;top:401.00px;font-size:10.17px;color:#1a1a2a;font-weight:normal;transform-origin:0 0;transform:scaleX(0.9449);">foregroundPP.teq</div>
<div class="t" style="left:72.50px;top:416.00px;font-size:10.17px;color:#1a1a2a;font-weight:normal;transform-origin:0 0;transform:scaleX(0.9004);">GaugesVoltage.teq</div>
<div class="t" style="left:72.50px;top:430.00px;font-size:10.17px;color:#1a1a2a;font-weight:normal;transform-origin:0 0;transform:scaleX(0.9162);">glossyHL.teq</div>
<div class="t" style="left:72.50px;top:444.00px;font-size:10.17px;color:#1a1a2a;font-weight:normal;transform-origin:0 0;transform:scaleX(0.9039);">glossyHU.teq</div>
<div class="t" style="left:72.50px;top:459.00px;font-size:10.17px;color:#1a1a2a;font-weight:normal;transform-origin:0 0;transform:scaleX(0.9030);">Languages.teq</div>
<div class="t" style="left:72.50px;top:473.00px;font-size:10.17px;color:#1a1a2a;font-weight:normal;transform-origin:0 0;transform:scaleX(0.9303);">loadCatalog.teq</div>
<div class="a" style="left:232.20px;top:113.00px;width:12.10px;height:371.00px;background:#f0f0f0;"></div>
<div class="a" style="left:244.30px;top:85.50px;width:1.20px;height:399.50px;background:#c8c8c8;"></div>
<div class="a" style="left:233.00px;top:113.00px;width:11.50px;height:11.50px;background:#f4f4f4;"></div>
<div class="a" style="left:232.40px;top:125.30px;width:10.90px;height:231.00px;background:linear-gradient(90deg,#f8f8f8,#ececec 60%,#dcdcdc);border:1px solid #c4c4c4;border-radius:1.5px;"></div>
<div class="a" style="left:233.50px;top:472.50px;width:11.00px;height:11.50px;background:#f4f4f4;"></div>
<svg class="a" style="left:0px;top:0px;" width="250" height="490" viewBox="0 0 250 490"><path d="M235.8 121 L238.7 117.8 L241.6 121 Z" fill="#303030"/><path d="M235.8 476 L238.7 479.2 L241.6 476 Z" fill="#303030"/><path d="M236 239.5 H241.5 M236 241.5 H241.5 M236 243.5 H241.5" stroke="#808080" stroke-width="0.7"/></svg>
<div class="a" style="left:9.50px;top:483.20px;width:235.50px;height:1.00px;background:#c0c0c0;"></div>
<div class="a" style="left:7.00px;top:485.00px;width:241.00px;height:19.00px;background:#e8e8e8;"></div>
<div class="a" style="left:79.00px;top:486.00px;width:166.00px;height:17.00px;background:#dcdcdc;"></div>
<div class="a" style="left:9.00px;top:485.00px;width:69.00px;height:17.00px;background:#ffffff;border:1px solid #c8c8c8;border-top:none;"></div>
<svg class="a" style="left:0px;top:0px;" width="250" height="505" viewBox="0 0 250 505"><circle cx="17.2" cy="493.6" r="5" fill="#fff" stroke="#1fa0c8" stroke-width="1.4"/><path d="M19.5 491.3 C18.4 490.0 14.799999999999999 490.20000000000005 15.0 492.20000000000005 C15.2 493.90000000000003 19.7 493.20000000000005 19.5 495.20000000000005 C19.3 497.0 15.6 496.8 14.7 495.6" fill="none" stroke="#1fa0c8" stroke-width="1.5"/><path d="M13.6 497.0 Q13.799999999999999 499.20000000000005 16.2 499.40000000000003" fill="none" stroke="#1fa0c8" stroke-width="1.1"/><rect x="82.5" y="487.5" width="12" height="12.5" fill="#fff"/><circle cx="88.6" cy="493.6" r="5" fill="#fff" stroke="#1fa0c8" stroke-width="1.4"/><path d="M90.89999999999999 491.3 C89.8 490.0 86.19999999999999 490.20000000000005 86.39999999999999 492.20000000000005 C86.6 493.90000000000003 91.1 493.20000000000005 90.89999999999999 495.20000000000005 C90.69999999999999 497.0 87.0 496.8 86.1 495.6" fill="none" stroke="#1fa0c8" stroke-width="1.5"/><path d="M85.0 497.0 Q85.19999999999999 499.20000000000005 87.6 499.40000000000003" fill="none" stroke="#1fa0c8" stroke-width="1.1"/></svg>
<div class="t" style="left:25.60px;top:490.00px;font-size:10.17px;color:#1e1e2a;font-weight:normal;transform-origin:0 0;transform:scaleX(0.8501);">Project Files</div>
<div class="t" style="left:96.50px;top:490.00px;font-size:10.17px;color:#8a8a8a;font-weight:normal;transform-origin:0 0;transform:scaleX(0.8877);">Teq View Explorer</div>
<div class="a" style="left:245.00px;top:85.00px;width:7.00px;height:400.00px;background:#e8e8e8;"></div>
<div class="a" style="left:248.00px;top:71.00px;width:4.00px;height:433.00px;background:#ececec;"></div>
<div class="a" style="left:250.00px;top:71.00px;width:1.00px;height:433.00px;background:#d4d4d4;"></div>
<div class="a" style="left:252.00px;top:71.00px;width:428.00px;height:17.00px;background:#f0f0f0;"></div>
<svg class="a" style="left:0px;top:0px;" width="690" height="95" viewBox="0 0 690 95"><defs><linearGradient id="sp" x1="0" y1="0" x2="0" y2="1"><stop offset="0" stop-color="#ffffff"/><stop offset="0.45" stop-color="#f4f6ff"/><stop offset="0.55" stop-color="#d2d2fa"/><stop offset="1" stop-color="#c8c8f8"/></linearGradient><linearGradient id="bg" x1="0" y1="0" x2="0" y2="1"><stop offset="0" stop-color="#fffaa0"/><stop offset="0.48" stop-color="#fff090"/><stop offset="0.52" stop-color="#ffcc70"/><stop offset="1" stop-color="#ffc460"/></linearGradient></defs><path d="M253.2 87.8 L267.6 72.6 H328 L317 87.8 Z" fill="url(#sp)" stroke="#a8a8b8" stroke-width="0.7"/><path d="M317 87.8 L328 72.6 H427.6 V87.8 Z" fill="url(#bg)" stroke="#9a9a8a" stroke-width="0.7"/><path d="M418.6 78.2 L423.6 83.2 M423.6 78.2 L418.6 83.2" stroke="#101010" stroke-width="1.2"/><path d="M668 78 H675.5 L671.75 81.8 Z" fill="#101010"/></svg>
<div class="t" style="left:277.30px;top:74.00px;font-size:10.17px;color:#1a1a2e;font-weight:normal;transform-origin:0 0;transform:scaleX(0.8542);">Start Page</div>
<div class="t" style="left:342.00px;top:75.00px;font-size:9.95px;color:#101010;font-weight:bold;transform-origin:0 0;transform:scaleX(0.8658);">Background.teq</div>
<div class="a" style="left:252.00px;top:87.60px;width:428.00px;height:1.30px;background:#7c7c7c;"></div>
<div class="a" style="left:252.00px;top:88.00px;width:1.00px;height:359.00px;background:#dcb898;"></div>
<div class="a" style="left:253.00px;top:88.50px;width:1.60px;height:358.00px;background:#8c8c8c;"></div>
<div class="a" style="left:253.00px;top:88.50px;width:427.00px;height:358.00px;background:#c4c4c4;"></div>
<div class="a" style="left:253.00px;top:88.00px;width:1.60px;height:359.00px;background:#8a8a8a;"></div>
<div class="a" style="left:252.00px;top:445.50px;width:428.00px;height:1.50px;background:#f4f0b8;"></div>
<div class="a" style="left:678.60px;top:88.50px;width:1.60px;height:358.50px;background:#f8f8d0;"></div>
<div class="a" style="left:680.20px;top:71.00px;width:1.00px;height:433.00px;background:#b8b8b8;"></div>
<div class="a" style="left:254.60px;top:89.00px;width:405.40px;height:277.80px;background:#d8d8d8;"></div>
<div class="a" style="left:254.60px;top:89.00px;width:190.60px;height:108.00px;background:#ffffff;"></div>
<div class="a" style="left:445.20px;top:89.00px;width:147.00px;height:108.00px;background:#e3e3e3;"></div>
<div class="a" style="left:254.60px;top:197.00px;width:35.80px;height:169.80px;background:#c0c0c0;"></div>
<div class="a" style="left:290.40px;top:197.00px;width:301.60px;height:19.00px;background:#4e4e4e;"></div>
<div class="a" style="left:290.40px;top:216.00px;width:301.60px;height:1.00px;background:#f2f2f2;"></div>
<div class="a" style="left:592.00px;top:107.30px;width:68.00px;height:259.50px;background:#4e4e4e;"></div>
<div class="a" style="left:592.00px;top:89.00px;width:68.00px;height:18.30px;background:#0b98f8;"></div>
<div class="a" style="left:258.80px;top:200.00px;width:27.80px;height:27.50px;background:#0b98f8;"></div>
<div class="a" style="left:258.80px;top:232.00px;width:27.80px;height:27.50px;background:#0b98f8;"></div>
<div class="a" style="left:258.80px;top:263.80px;width:27.80px;height:27.50px;background:#0b98f8;"></div>
<div class="a" style="left:258.80px;top:295.40px;width:27.80px;height:27.50px;background:#0b98f8;"></div>
<svg class="a" style="left:0px;top:0px;" width="690" height="380" viewBox="0 0 690 380"><circle cx="274.8" cy="209.5" r="3.3" fill="#fff"/><rect x="273.90000000000003" y="204.79999999999998" width="1.8" height="2" fill="#fff" transform="rotate(0 274.8 209.5)"/><rect x="273.90000000000003" y="204.79999999999998" width="1.8" height="2" fill="#fff" transform="rotate(45 274.8 209.5)"/><rect x="273.90000000000003" y="204.79999999999998" width="1.8" height="2" fill="#fff" transform="rotate(90 274.8 209.5)"/><rect x="273.90000000000003" y="204.79999999999998" width="1.8" height="2" fill="#fff" transform="rotate(135 274.8 209.5)"/><rect x="273.90000000000003" y="204.79999999999998" width="1.8" height="2" fill="#fff" transform="rotate(180 274.8 209.5)"/><rect x="273.90000000000003" y="204.79999999999998" width="1.8" height="2" fill="#fff" transform="rotate(225 274.8 209.5)"/><rect x="273.90000000000003" y="204.79999999999998" width="1.8" height="2" fill="#fff" transform="rotate(270 274.8 209.5)"/><rect x="273.90000000000003" y="204.79999999999998" width="1.8" height="2" fill="#fff" transform="rotate(315 274.8 209.5)"/><circle cx="274.8" cy="209.5" r="1.32" fill="#0b98f8"/><circle cx="270.8" cy="218.4" r="3.3" fill="#fff"/><rect x="269.90000000000003" y="213.7" width="1.8" height="2" fill="#fff" transform="rotate(0 270.8 218.4)"/><rect x="269.90000000000003" y="213.7" width="1.8" height="2" fill="#fff" transform="rotate(45 270.8 218.4)"/><rect x="269.90000000000003" y="213.7" width="1.8" height="2" fill="#fff" transform="rotate(90 270.8 218.4)"/><rect x="269.90000000000003" y="213.7" width="1.8" height="2" fill="#fff" transform="rotate(135 270.8 218.4)"/><rect x="269.90000000000003" y="213.7" width="1.8" height="2" fill="#fff" transform="rotate(180 270.8 218.4)"/><rect x="269.90000000000003" y="213.7" width="1.8" height="2" fill="#fff" transform="rotate(225 270.8 218.4)"/><rect x="269.90000000000003" y="213.7" width="1.8" height="2" fill="#fff" transform="rotate(270 270.8 218.4)"/><rect x="269.90000000000003" y="213.7" width="1.8" height="2" fill="#fff" transform="rotate(315 270.8 218.4)"/><circle cx="270.8" cy="218.4" r="1.32" fill="#0b98f8"/><path d="M264.2 240 H277 L282 246 L277 252 H264.2 Z" fill="none" stroke="#fff" stroke-width="0.9"/><path d="M269 243.5 L273.5 248.5 M273.5 243.5 L269 248.5" stroke="#fff" stroke-width="0.9"/><path d="M280 271.5 A7 7 0 1 0 280.5 282" fill="none" stroke="#fff" stroke-width="2"/><path d="M276 268.5 L282.6 268.4 L282.2 275 Z" fill="#fff"/><path d="M265.4 310.5 L272.6 303.8 L279.8 310.5 H278 V315.6 H274.3 V312 H270.9 V315.6 H267.2 V310.5 Z" fill="#fff"/><rect x="276.4" y="304.5" width="1.8" height="3.5" fill="#fff"/><rect x="259.2" y="323.6" width="27" height="6.6" fill="#fff" stroke="#000" stroke-width="0.8"/><text x="259.8" y="329.0" font-family="Liberation Sans" font-weight="bold" font-size="5.8" fill="#000" textLength="26" lengthAdjust="spacingAndGlyphs">configDigInc</text><rect x="259.2" y="331.2" width="27" height="6.6" fill="#fff" stroke="#000" stroke-width="0.8"/><text x="259.8" y="336.59999999999997" font-family="Liberation Sans" font-weight="bold" font-size="5.8" fill="#000" textLength="26" lengthAdjust="spacingAndGlyphs">configDigInc</text><rect x="259.2" y="338.8" width="27" height="6.6" fill="#fff" stroke="#000" stroke-width="0.8"/><text x="259.8" y="344.2" font-family="Liberation Sans" font-weight="bold" font-size="5.8" fill="#000" textLength="26" lengthAdjust="spacingAndGlyphs">configDigInc</text><rect x="259.2" y="351.4" width="27" height="6.6" fill="#fff" stroke="#606060" stroke-width="0.6"/><text x="259.8" y="357" font-family="Liberation Sans" font-weight="bold" font-size="5.8" fill="#000" textLength="15" lengthAdjust="spacingAndGlyphs">groupID</text><path d="M348 184 L355.2 192.8 H351.6 V197 H344.4 V192.8 H340.8 Z" fill="#5ab6f6" stroke="#3a90d8" stroke-width="0.5"/><rect x="344.4" y="197" width="7.2" height="6.8" fill="#2a6ed6" stroke="#1a3a70" stroke-width="0.6"/><text x="409" y="209" font-family="Liberation Sans" font-size="5.6" font-weight="bold" fill="#101020" textLength="65" lengthAdjust="spacingAndGlyphs">ElementPicking.keyboardFocus</text><rect x="595.8" y="113" width="28.2" height="27.6" fill="#0b98f8"/><rect x="627.8" y="113" width="28.2" height="27.6" fill="#0b98f8"/><rect x="595.8" y="144.8" width="28.2" height="27.6" fill="#0b98f8"/><rect x="627.8" y="144.8" width="28.2" height="27.6" fill="#0b98f8"/><rect x="595.8" y="176.5" width="28.2" height="27.6" fill="#0b98f8"/><rect x="627.8" y="176.5" width="28.2" height="27.6" fill="#0b98f8"/><rect x="595.8" y="208.3" width="28.2" height="27.6" fill="#0b98f8"/><rect x="627.8" y="208.3" width="28.2" height="27.6" fill="#0b98f8"/><rect x="595.8" y="240" width="28.2" height="27.6" fill="#0b98f8"/><rect x="627.8" y="240" width="28.2" height="27.6" fill="#0b98f8"/><rect x="595.8" y="271.8" width="28.2" height="27.6" fill="#0b98f8"/><rect x="627.8" y="271.8" width="28.2" height="27.6" fill="#0b98f8"/><rect x="598.6" y="90.7" width="11.1" height="16" fill="#050505"/><rect x="600.6" y="92.6" width="5" height="2" fill="#40b0ff"/><circle cx="610" cy="121.6" r="4.9" fill="#000"/><rect x="607.6" y="124" width="4.8" height="6" fill="#000"/><rect x="608" y="129.5" width="4" height="2.8" rx="1.2" fill="#0a1040"/><circle cx="641.8" cy="126.8" r="9.6" fill="none" stroke="#02082a" stroke-width="2.1"/><rect x="636.3" y="131" width="11" height="3" fill="#000"/><path d="M636.8 121.2 L644 128.2 L642 129.6 Z" fill="#000"/><circle cx="635.03" cy="128.59" r="0.5" fill="#000"/><circle cx="635.00" cy="125.13" r="0.5" fill="#000"/><circle cx="636.64" cy="122.07" r="0.5" fill="#000"/><circle cx="639.54" cy="120.18" r="0.5" fill="#000"/><circle cx="642.99" cy="119.90" r="0.5" fill="#000"/><circle cx="646.15" cy="121.32" r="0.5" fill="#000"/><circle cx="648.25" cy="124.07" r="0.5" fill="#000"/><circle cx="648.77" cy="127.50" r="0.5" fill="#000"/><path d="M602.6 153 Q610 150.6 617.4 153 Q620.6 159.5 619 162 Q617.2 163.2 614.6 160.2 H605.4 Q602.8 163.2 601 162 Q599.4 159.5 602.6 153 Z" fill="#000"/><circle cx="614.6" cy="155" r="1.1" fill="#1060e0"/><circle cx="605" cy="155.4" r="1.1" fill="#1060e0"/><text x="636" y="163" font-family="Liberation Serif" font-weight="bold" font-size="14" fill="#000010">U</text><rect x="635.6" y="163.2" width="11" height="1.4" fill="#000030"/><rect x="602.5" y="186" width="15" height="8.5" fill="#000"/><rect x="635" y="184" width="14" height="11" fill="#000"/><path d="M636.5 193 L639 189 L641 190.5 L643.5 187 L647.5 188 V193.5 H636.5 Z" fill="#0b7ad8"/><circle cx="609.8" cy="221.6" r="6.8" fill="#002a80"/><circle cx="609.8" cy="221.6" r="4.2" fill="#000"/><rect x="636.4" y="213.3" width="12" height="12" fill="#0b64c8"/><path d="M636.4 212.3 V226.6 H648.8" fill="none" stroke="#000" stroke-width="1.4"/><path d="M637.5 224.3 L641 218.3 L643.5 221.3 L648.5 214.3" fill="none" stroke="#000" stroke-width="1.2"/><rect x="603.2" y="246.0" width="13.7" height="2.6" fill="#000"/><rect x="603.2" y="249.9" width="13.7" height="2.6" fill="#000"/><rect x="603.2" y="253.8" width="13.7" height="2.6" fill="#000"/><rect x="603.2" y="257.7" width="13.7" height="2.6" fill="#000"/><rect x="603.2" y="261.6" width="13.7" height="2.6" fill="#000"/><rect x="604.5" y="246" width="0.6" height="17.6" fill="#0b98f8"/><circle cx="641.8" cy="253" r="2.3" fill="#101010"/><path d="M641.8 255.3 V259" stroke="#101010" stroke-width="0.8"/><path d="M635.3 256.4 L641.8 259 L635.3 261.6 Z M648.3 256.4 L641.8 259 L648.3 261.6 Z" fill="#303030" stroke="#000" stroke-width="0.6"/><circle cx="610" cy="284.8" r="2.3" fill="#101010"/><path d="M610 287.1 V290.8" stroke="#101010" stroke-width="0.8"/><path d="M603.5 288.2 L610 290.8 L603.5 293.40000000000003 Z M616.5 288.2 L610 290.8 L616.5 293.40000000000003 Z" fill="#303030" stroke="#000" stroke-width="0.6"/><circle cx="641.8" cy="284.8" r="2.3" fill="#101010"/><path d="M641.8 287.1 V290.8" stroke="#101010" stroke-width="0.8"/><path d="M635.3 288.2 L641.8 290.8 L635.3 293.40000000000003 Z M648.3 288.2 L641.8 290.8 L648.3 293.40000000000003 Z" fill="#303030" stroke="#000" stroke-width="0.6"/><path d="M580.6 285.2 L588 278.6 V282.2 H595.8 V288.2 H588 V291.8 Z" fill="#5ab0f0" stroke="#3a88d8" stroke-width="0.5"/><rect x="591" y="282.2" width="4.8" height="6" fill="#3a7ee0"/><rect x="593.8" y="110" width="32.6" height="32.8" fill="none" stroke="#000" stroke-width="1.1"/><rect x="591.9" y="108.1" width="3.8" height="3.8" fill="#000"/><rect x="591.9" y="124.3" width="3.8" height="3.8" fill="#000"/><rect x="591.9" y="140.9" width="3.8" height="3.8" fill="#000"/><rect x="608.0" y="108.1" width="3.8" height="3.8" fill="#000"/><rect x="608.0" y="140.9" width="3.8" height="3.8" fill="#000"/><rect x="624.5" y="108.1" width="3.8" height="3.8" fill="#000"/><rect x="624.5" y="124.3" width="3.8" height="3.8" fill="#000"/><rect x="624.5" y="140.9" width="3.8" height="3.8" fill="#000"/><path d="M614 326 Q611 336 613.5 343 L617 345 L629 343 Q631 336 629 326 Z" fill="#28a0dc"/><path d="M617.5 331 L614 341 L609 346.5 L609.5 349 L618.5 348 L622 338 L626 344 L629.5 349.5 L637.5 350 L636 347 L630 341 L628.5 332 Z" fill="#ffffff" stroke="#1a5aa0" stroke-width="0.5"/><path d="M616.5 324 Q616 330 618 334 L628 334 Q630 329 629 324 Q622 321 616.5 324 Z" fill="#bfe4fa" stroke="#2a70b0" stroke-width="0.4"/><circle cx="621" cy="329" r="2.3" fill="#48aee8"/><path d="M627 324 Q633 324 641.5 327.5 Q637 331 630 330.5 Z" fill="#9ad0f4" stroke="#2a70b0" stroke-width="0.4"/><ellipse cx="625.2" cy="316.8" rx="6.3" ry="6.3" fill="#8ec8f0" stroke="#2a60a0" stroke-width="0.5"/><path d="M618.5 309.5 Q622 304.5 626 303.5 L627 306 L630 304 L631 307.5 L635 310 L634.5 314 L635.5 318.5 L632 315 L629 311 L623 309.5 Z" fill="#f4d018" stroke="#a89010" stroke-width="0.4"/><path d="M624 308.5 L626 304.5 M628.5 306 L629.5 303.5" stroke="#40a040" stroke-width="0.6"/><ellipse cx="626.2" cy="312.8" rx="1" ry="1.4" fill="#000"/><path d="M622.5 319 Q625.5 321.8 628.5 318.5 Z" fill="#d8204a" stroke="#700018" stroke-width="0.5"/><path d="M634 308.5 L639.5 303" stroke="#202020" stroke-width="0.7"/><path d="M640 300.3 L641 302.2 L642.8 302.6 L641.2 303.7 L641.5 305.4 L640 304.5 L638.5 305.4 L638.8 303.7 L637.2 302.6 L639 302.2 Z" fill="#fff"/><rect x="596" y="311.6" width="19.4" height="6.8" fill="#f4f4f4" stroke="#181818" stroke-width="0.8"/><path d="M598 316.1 H613" stroke="#b8b8b8" stroke-width="1.6" stroke-dasharray="1.5 0.8"/><rect x="596" y="319.4" width="19.4" height="6.8" fill="#f4f4f4" stroke="#181818" stroke-width="0.8"/><path d="M598 323.9 H613" stroke="#b8b8b8" stroke-width="1.6" stroke-dasharray="1.5 0.8"/><rect x="596" y="327.4" width="19.4" height="6.8" fill="#f4f4f4" stroke="#181818" stroke-width="0.8"/><path d="M598 331.9 H613" stroke="#b8b8b8" stroke-width="1.6" stroke-dasharray="1.5 0.8"/></svg>
<div class="a" style="left:681.00px;top:71.00px;width:3.00px;height:433.00px;background:#ececec;"></div>
<div class="a" style="left:684.00px;top:71.00px;width:334.00px;height:14.50px;background:#c0c0c0;"></div>
<div class="t" style="left:687.80px;top:74.00px;font-size:10.17px;color:#f2f2f2;font-weight:normal;transform-origin:0 0;transform:scaleX(0.8683);-webkit-text-stroke:0;">Properties</div>
<svg class="a" style="left:0px;top:0px;" width="1024" height="90" viewBox="0 0 1024 90"><path d="M981.2 77.4 H988.6 L984.9 81.2 Z" fill="#fff"/><path d="M996 76.5 H1000.5 M997 76.5 V80 H999.5 V76.5 M995.5 80 H1001 M998.2 80 V82.5" fill="none" stroke="#fff" stroke-width="0.9"/><path d="M1007.5 76.2 L1013.5 82 M1013.5 76.2 L1007.5 82" stroke="#fff" stroke-width="1.1"/></svg>
<div class="a" style="left:684.00px;top:85.50px;width:334.00px;height:17.00px;background:#f0f0f0;"></div>
<div class="a" style="left:684.00px;top:85.00px;width:334.00px;height:1.00px;background:#acacac;"></div>
<div class="a" style="left:684.00px;top:86.00px;width:334.00px;height:2.50px;background:linear-gradient(#dedede,#f0f0f0);"></div>
<div class="t" style="left:685.00px;top:87.00px;font-size:9.95px;color:#14143a;font-weight:normal;transform-origin:0 0;transform:scaleX(0.8004);">Button</div>
<div class="a" style="left:684.00px;top:102.30px;width:334.00px;height:22.00px;background:linear-gradient(#ffffff 0%,#ffffff 28%,#f2f2f2 40%,#dedede 70%,#c8c8c8 94%,#d4d4d4 100%);"></div>
<svg class="a" style="left:0px;top:0px;" width="1024" height="130" viewBox="0 0 1024 130"><rect x="690.5" y="107.5" width="5" height="5" fill="none" stroke="#202020" stroke-width="0.9"/><rect x="690.5" y="114" width="5" height="5" fill="none" stroke="#202020" stroke-width="0.9"/><path d="M693 108.5 V111.5 M691.5 110 H694.5 M691.5 116.5 H694.5 M693 115 V118" stroke="#202020" stroke-width="0.7"/><path d="M697.5 108 H702 M697.5 110 H702 M697.5 112 H702 M697.5 114.5 H702 M697.5 116.5 H702 M697.5 118.5 H702" stroke="#404040" stroke-width="0.9" stroke-dasharray="1.2 0.6"/><text x="711" y="113" font-family="Liberation Sans" font-size="6" fill="#202020">A</text><text x="711" y="119.5" font-family="Liberation Sans" font-size="6" fill="#202020">2</text><path d="M718.5 108 V118.5 M716.5 116 L718.5 119 L720.5 116" fill="none" stroke="#1a2a9a" stroke-width="1"/><rect x="732" y="109" width="10" height="9" fill="#f4f4f4" stroke="#b8b8b8" stroke-width="0.8"/><path d="M732 112 H742 M732 115 H742 M735.5 109 V118" stroke="#c8c8c8" stroke-width="0.6"/><path d="M760 107.5 L754.5 114 H758 L753.5 120 L761.5 112.5 H758 L762 107.5 Z" fill="#f0e020" stroke="#404000" stroke-width="0.5"/></svg>
<div class="a" style="left:684.00px;top:124.40px;width:334.00px;height:274.60px;background:#f0f0f0;"></div>
<div class="a" style="left:714.00px;top:155.32px;width:137.00px;height:14.10px;background:#ffffff;"></div>
<div class="a" style="left:852.00px;top:155.32px;width:153.00px;height:14.10px;background:#ffffff;"></div>
<div class="a" style="left:714.00px;top:170.38px;width:137.00px;height:14.10px;background:#ffffff;"></div>
<div class="a" style="left:852.00px;top:170.38px;width:153.00px;height:14.10px;background:#ffffff;"></div>
<div class="a" style="left:714.00px;top:185.44px;width:137.00px;height:14.10px;background:#ffffff;"></div>
<div class="a" style="left:852.00px;top:185.44px;width:153.00px;height:14.10px;background:#ffffff;"></div>
<div class="a" style="left:714.00px;top:200.50px;width:137.00px;height:14.10px;background:#ffffff;"></div>
<div class="a" style="left:852.00px;top:200.50px;width:153.00px;height:14.10px;background:#ffffff;"></div>
<div class="a" style="left:714.00px;top:230.62px;width:137.00px;height:14.10px;background:#ffffff;"></div>
<div class="a" style="left:852.00px;top:230.62px;width:153.00px;height:14.10px;background:#ffffff;"></div>
<div class="a" style="left:714.00px;top:245.68px;width:137.00px;height:14.10px;background:#ffffff;"></div>
<div class="a" style="left:852.00px;top:245.68px;width:153.00px;height:14.10px;background:#ffffff;"></div>
<div class="a" style="left:714.00px;top:260.74px;width:137.00px;height:14.10px;background:#ffffff;"></div>
<div class="a" style="left:852.00px;top:260.74px;width:153.00px;height:14.10px;background:#ffffff;"></div>
<div class="a" style="left:714.00px;top:275.80px;width:137.00px;height:14.10px;background:#ffffff;"></div>
<div class="a" style="left:852.00px;top:275.80px;width:153.00px;height:14.10px;background:#ffffff;"></div>
<div class="a" style="left:714.00px;top:305.92px;width:137.00px;height:14.10px;background:#ffffff;"></div>
<div class="a" style="left:852.00px;top:305.92px;width:153.00px;height:14.10px;background:#ffffff;"></div>
<div class="a" style="left:714.00px;top:336.04px;width:137.00px;height:14.10px;background:#ffffff;"></div>
<div class="a" style="left:852.00px;top:336.04px;width:153.00px;height:14.10px;background:#ffffff;"></div>
<div class="a" style="left:714.00px;top:351.10px;width:137.00px;height:14.10px;background:#ffffff;"></div>
<div class="a" style="left:852.00px;top:351.10px;width:153.00px;height:14.10px;background:#ffffff;"></div>
<svg class="a" style="left:0px;top:0px;" width="1024" height="400" viewBox="0 0 1024 400"><rect x="688.4" y="128.4" width="7" height="7" fill="#f8f8f8" stroke="#a8a8a8" stroke-width="0.8"/><path d="M690.1999999999999 131.9 H693.6" stroke="#4a5a8a" stroke-width="0.9"/><rect x="703.4" y="143.46" width="7" height="7" fill="#f8f8f8" stroke="#a8a8a8" stroke-width="0.8"/><path d="M705.1999999999999 146.96 H708.6" stroke="#4a5a8a" stroke-width="0.9"/><rect x="703.4" y="218.76000000000002" width="7" height="7" fill="#f8f8f8" stroke="#a8a8a8" stroke-width="0.8"/><path d="M705.1999999999999 222.26000000000002 H708.6" stroke="#4a5a8a" stroke-width="0.9"/><rect x="853.6" y="231.82" width="12" height="12" fill="#0b98f8" stroke="#101010" stroke-width="0.9"/><rect x="853.6" y="246.88" width="12" height="12" fill="#0b98f8" stroke="#101010" stroke-width="0.9"/><rect x="855.3" y="262.54" width="9.6" height="9.8" fill="#eeeeee" stroke="#a0a0a0" stroke-width="0.8"/><path d="M857.5 267.54 L859.6 270.34000000000003 L863 264.34000000000003" fill="none" stroke="#3a5aa8" stroke-width="1.1"/><rect x="855.3" y="277.59999999999997" width="9.6" height="9.8" fill="#eeeeee" stroke="#a0a0a0" stroke-width="0.8"/><path d="M857.5 282.59999999999997 L859.6 285.4 L863 279.4" fill="none" stroke="#3a5aa8" stroke-width="1.1"/><rect x="703.4" y="294.06" width="7" height="7" fill="#f8f8f8" stroke="#a8a8a8" stroke-width="0.8"/><path d="M705.1999999999999 297.56 H708.6" stroke="#4a5a8a" stroke-width="0.9"/><rect x="703.4" y="324.18" width="7" height="7" fill="#f8f8f8" stroke="#a8a8a8" stroke-width="0.8"/><path d="M705.1999999999999 327.68 H708.6" stroke="#4a5a8a" stroke-width="0.9"/><rect x="853.5" y="352.0" width="13.2" height="13.2" fill="#555"/><rect x="855.7" y="354.20000000000005" width="8.8" height="8.8" fill="#fff" stroke="#000" stroke-width="1.3"/><rect x="869.8" y="353.90000000000003" width="9" height="9.2" fill="none" stroke="#000" stroke-width="1.2" stroke-dasharray="2.2 1.2"/><rect x="884.8" y="353.90000000000003" width="9" height="9.2" fill="none" stroke="#000" stroke-width="1.2" stroke-dasharray="1 1.3"/><rect x="688.4" y="369.35999999999996" width="7" height="7" fill="#f8f8f8" stroke="#a8a8a8" stroke-width="0.8"/><path d="M690.1999999999999 372.85999999999996 H693.6" stroke="#4a5a8a" stroke-width="0.9"/><rect x="703.4" y="384.41999999999996" width="7" height="7" fill="#f8f8f8" stroke="#a8a8a8" stroke-width="0.8"/><path d="M705.1999999999999 387.91999999999996 H708.6" stroke="#4a5a8a" stroke-width="0.9"/><path d="M706.9 386.21999999999997 V389.61999999999995" stroke="#4a5a8a" stroke-width="0.9"/></svg>
<div class="t" style="left:702.60px;top:127.00px;font-size:9.95px;color:#6b7786;font-weight:bold;transform-origin:0 0;transform:scaleX(0.9320);">General</div>
<div class="t" style="left:717.60px;top:142.00px;font-size:9.95px;color:#6b7786;font-weight:bold;transform-origin:0 0;transform:scaleX(0.9025);">Size - Position</div>
<div class="t" style="left:717.70px;top:157.00px;font-size:10.17px;color:#181828;font-weight:normal;transform-origin:0 0;transform:scaleX(0.8111);">X</div>
<div class="t" style="left:854.60px;top:157.00px;font-size:10.17px;color:#181828;font-weight:normal;transform-origin:0 0;transform:scaleX(0.8848);">860</div>
<div class="t" style="left:717.70px;top:172.00px;font-size:10.17px;color:#181828;font-weight:normal;transform-origin:0 0;transform:scaleX(0.7373);">Y</div>
<div class="t" style="left:854.60px;top:172.00px;font-size:10.17px;color:#181828;font-weight:normal;transform-origin:0 0;transform:scaleX(0.8852);">60</div>
<div class="t" style="left:717.70px;top:187.00px;font-size:10.17px;color:#181828;font-weight:normal;transform-origin:0 0;transform:scaleX(0.8964);">W</div>
<div class="t" style="left:854.60px;top:187.00px;font-size:10.17px;color:#181828;font-weight:normal;transform-origin:0 0;transform:scaleX(0.8852);">70</div>
<div class="t" style="left:717.70px;top:202.00px;font-size:10.17px;color:#181828;font-weight:normal;transform-origin:0 0;transform:scaleX(0.8851);">H</div>
<div class="t" style="left:854.60px;top:202.00px;font-size:10.17px;color:#181828;font-weight:normal;transform-origin:0 0;transform:scaleX(0.8852);">70</div>
<div class="t" style="left:717.60px;top:218.00px;font-size:9.95px;color:#6b7786;font-weight:bold;transform-origin:0 0;transform:scaleX(0.8747);">Color</div>
<div class="t" style="left:717.70px;top:233.00px;font-size:10.17px;color:#181828;font-weight:normal;transform-origin:0 0;transform:scaleX(0.9617);">Interior</div>
<div class="t" style="left:869.80px;top:233.00px;font-size:10.17px;color:#181828;font-weight:normal;transform-origin:0 0;transform:scaleX(0.9122);">0080ff</div>
<div class="t" style="left:717.70px;top:248.00px;font-size:10.17px;color:#181828;font-weight:normal;transform-origin:0 0;transform:scaleX(0.9693);">Outline</div>
<div class="t" style="left:869.80px;top:248.00px;font-size:10.17px;color:#181828;font-weight:normal;transform-origin:0 0;transform:scaleX(0.9122);">0080ff</div>
<div class="t" style="left:717.70px;top:263.00px;font-size:10.17px;color:#181828;font-weight:normal;transform-origin:0 0;transform:scaleX(0.9219);">Has Interior</div>
<div class="t" style="left:717.70px;top:278.00px;font-size:10.17px;color:#181828;font-weight:normal;transform-origin:0 0;transform:scaleX(0.9272);">Has Outline</div>
<div class="t" style="left:717.60px;top:293.00px;font-size:9.95px;color:#6b7786;font-weight:bold;transform-origin:0 0;transform:scaleX(0.9010);">Font</div>
<div class="t" style="left:717.70px;top:308.00px;font-size:10.17px;color:#181828;font-weight:normal;transform-origin:0 0;transform:scaleX(0.9297);">Font</div>
<div class="t" style="left:854.60px;top:308.00px;font-size:10.17px;color:#181828;font-weight:normal;transform-origin:0 0;transform:scaleX(0.9117);">Arial(12)</div>
<div class="t" style="left:717.60px;top:323.00px;font-size:9.95px;color:#6b7786;font-weight:bold;transform-origin:0 0;transform:scaleX(0.9406);">Outline</div>
<div class="t" style="left:717.70px;top:338.00px;font-size:10.17px;color:#181828;font-weight:normal;transform-origin:0 0;transform:scaleX(0.9550);">Width</div>
<div class="t" style="left:854.60px;top:338.00px;font-size:10.17px;color:#181828;font-weight:normal;transform-origin:0 0;transform:scaleX(0.8840);">2</div>
<div class="t" style="left:717.70px;top:353.00px;font-size:10.17px;color:#181828;font-weight:normal;transform-origin:0 0;transform:scaleX(0.8896);">Style</div>
<div class="t" style="left:702.60px;top:368.00px;font-size:9.95px;color:#6b7786;font-weight:bold;transform-origin:0 0;transform:scaleX(0.9086);">Image Files (*.SVG)</div>
<div class="t" style="left:717.60px;top:383.00px;font-size:9.95px;color:#6b7786;font-weight:bold;transform-origin:0 0;transform:scaleX(0.8884);">bulb.svg</div>
<div class="a" style="left:1005.50px;top:124.60px;width:12.30px;height:271.00px;background:#f0f0f0;"></div>
<div class="a" style="left:1005.50px;top:125.00px;width:12.00px;height:12.40px;background:#f4f4f4;border:1px solid #d0d0d0;border-right-color:#909090;border-bottom-color:#909090;"></div>
<div class="a" style="left:1005.50px;top:138.30px;width:12.00px;height:48.00px;background:#ececec;border:1px solid #d8d8d8;border-right-color:#a0a0a0;border-bottom-color:#a0a0a0;"></div>
<div class="a" style="left:1005.50px;top:382.50px;width:12.00px;height:13.00px;background:#f4f4f4;border:1px solid #d0d0d0;border-right-color:#909090;border-bottom-color:#909090;"></div>
<svg class="a" style="left:0px;top:0px;" width="1024" height="400" viewBox="0 0 1024 400"><path d="M1008.5 133 L1011.5 129.7 L1014.5 133 Z" fill="#000"/><path d="M1008.5 387 L1011.5 390.3 L1014.5 387 Z" fill="#000"/></svg>
<div class="a" style="left:684.80px;top:399.00px;width:333.00px;height:48.00px;background:#f0f0f0;border:1px solid #a8a8a8;border-right-color:#d8d8d8;border-bottom-color:#d8d8d8;"></div>
<div class="a" style="left:252.00px;top:447.00px;width:766.00px;height:4.50px;background:#ececec;"></div>
<div class="a" style="left:252.00px;top:450.40px;width:766.00px;height:1.00px;background:#cacaca;"></div>
<div class="a" style="left:252.00px;top:451.50px;width:766.00px;height:14.30px;background:#c0c0c0;"></div>
<div class="t" style="left:255.10px;top:454.00px;font-size:10.17px;color:#f2f2f2;font-weight:normal;transform-origin:0 0;transform:scaleX(0.8424);-webkit-text-stroke:0;">Messages</div>
<svg class="a" style="left:0px;top:0px;" width="1024" height="470" viewBox="0 0 1024 470"><path d="M981.2 458 H988.6 L984.9 461.8 Z" fill="#fff"/><path d="M996 457 H1000.5 M997 457 V460.5 H999.5 V457 M995.5 460.5 H1001 M998.2 460.5 V463" fill="none" stroke="#fff" stroke-width="0.9"/><path d="M1007.5 456.6 L1013.5 462.4 M1013.5 456.6 L1007.5 462.4" stroke="#fff" stroke-width="1.1"/></svg>
<div class="a" style="left:252.00px;top:465.80px;width:766.00px;height:1.00px;background:#a0a0a0;"></div>
<div class="a" style="left:252.00px;top:466.60px;width:766.00px;height:21.00px;background:#ffffff;"></div>
<div class="t" style="left:254.50px;top:470.00px;font-size:10.17px;color:#141420;font-weight:normal;transform-origin:0 0;transform:scaleX(0.8357);">SCADA Load converted PPO List Files and Update ScadaPPOList file end at  01/14/16 15:40:19 [0]ms</div>
<div class="a" style="left:1003.50px;top:467.00px;width:14.00px;height:21.00px;background:#ececec;"></div>
<svg class="a" style="left:0px;top:0px;" width="1024" height="490" viewBox="0 0 1024 490"><path d="M1007.5 473 L1010.5 470.5 L1013.5 473 Z M1007.5 477 L1010.5 479.5 L1013.5 477 Z M1007.5 480.5 L1010.5 483 L1013.5 480.5 Z" fill="#202020"/><path d="M1007.5 478 H1013.5" stroke="#202020" stroke-width="0.8"/></svg>
<div class="a" style="left:252.00px;top:487.60px;width:766.00px;height:16.40px;background:#f0f0f0;"></div>
<div class="a" style="left:252.00px;top:487.60px;width:766.00px;height:0.90px;background:#8a8a8a;"></div>
<svg class="a" style="left:0px;top:0px;" width="1024" height="510" viewBox="0 0 1024 510"><path d="M304.4 488 L311 501 H344.5 L350.5 488 Z" fill="#fff" stroke="#606060" stroke-width="0.8"/><path d="M352.5 489.5 Q348.8 495 352 501 H421 L426.8 488" fill="none" stroke="#606060" stroke-width="0.8"/><path d="M428.5 489.5 Q424.8 495 428 501 H449.5 L455.5 488" fill="none" stroke="#606060" stroke-width="0.8"/><path d="M256.2 494.2 V499.8 M261.8 494 L258 497 L261.8 500 Z" fill="#202020" stroke="#202020" stroke-width="0.8"/><path d="M273.5 494 L269.8 497 L273.5 500 Z" fill="#202020"/><path d="M283.5 494 L287.2 497 L283.5 500 Z" fill="#202020"/><path d="M295.5 494 L299.2 497 L295.5 500 Z M300 494.2 V499.8" fill="#202020" stroke="#202020" stroke-width="0.8"/></svg>
<div class="t" style="left:313.00px;top:490.00px;font-size:9.95px;color:#141414;font-weight:bold;transform-origin:0 0;transform:scaleX(0.8906);">Output</div>
<div class="t" style="left:356.20px;top:490.00px;font-size:10.17px;color:#1e1e2e;font-weight:normal;transform-origin:0 0;transform:scaleX(0.8545);">Error - Warning</div>
<div class="t" style="left:430.50px;top:490.00px;font-size:10.17px;color:#1e1e2e;font-weight:normal;transform-origin:0 0;transform:scaleX(0.7842);">Find</div>
<div class="a" style="left:6.00px;top:503.00px;width:1012.00px;height:1.60px;background:#c4c4c4;"></div>
<div class="a" style="left:6.00px;top:504.60px;width:1012.00px;height:14.60px;background:#f0f0f0;"></div>
<div class="t" style="left:9.80px;top:508.00px;font-size:10.38px;color:#1e1e1e;font-weight:normal;transform-origin:0 0;transform:scaleX(0.8100);">Ready</div>
<div class="t" style="left:938.00px;top:508.00px;font-size:10.17px;color:#8a8a8a;font-weight:normal;transform-origin:0 0;transform:scaleX(0.7180);">CAP</div>
<div class="t" style="left:958.00px;top:508.00px;font-size:10.17px;color:#1e1e2e;font-weight:normal;transform-origin:0 0;transform:scaleX(0.8643);">NUM</div>
<div class="t" style="left:984.00px;top:508.00px;font-size:10.17px;color:#8a8a8a;font-weight:normal;transform-origin:0 0;transform:scaleX(0.7013);">SCRL</div>
<div class="a" style="left:954.50px;top:506.00px;width:0.80px;height:12.00px;background:#d0d0d0;"></div>
<div class="a" style="left:980.00px;top:506.00px;width:0.80px;height:12.00px;background:#d0d0d0;"></div>
<div class="a" style="left:1004.50px;top:506.00px;width:0.80px;height:12.00px;background:#d0d0d0;"></div>
<svg class="a" style="left:0px;top:0px;" width="1024" height="525" viewBox="0 0 1024 525"><path d="M1015.5 509 V517 M1013 512 V517 M1010.5 515 V517" stroke="#b0b0b0" stroke-width="0.9" stroke-dasharray="1 1"/></svg>
</body></html>
